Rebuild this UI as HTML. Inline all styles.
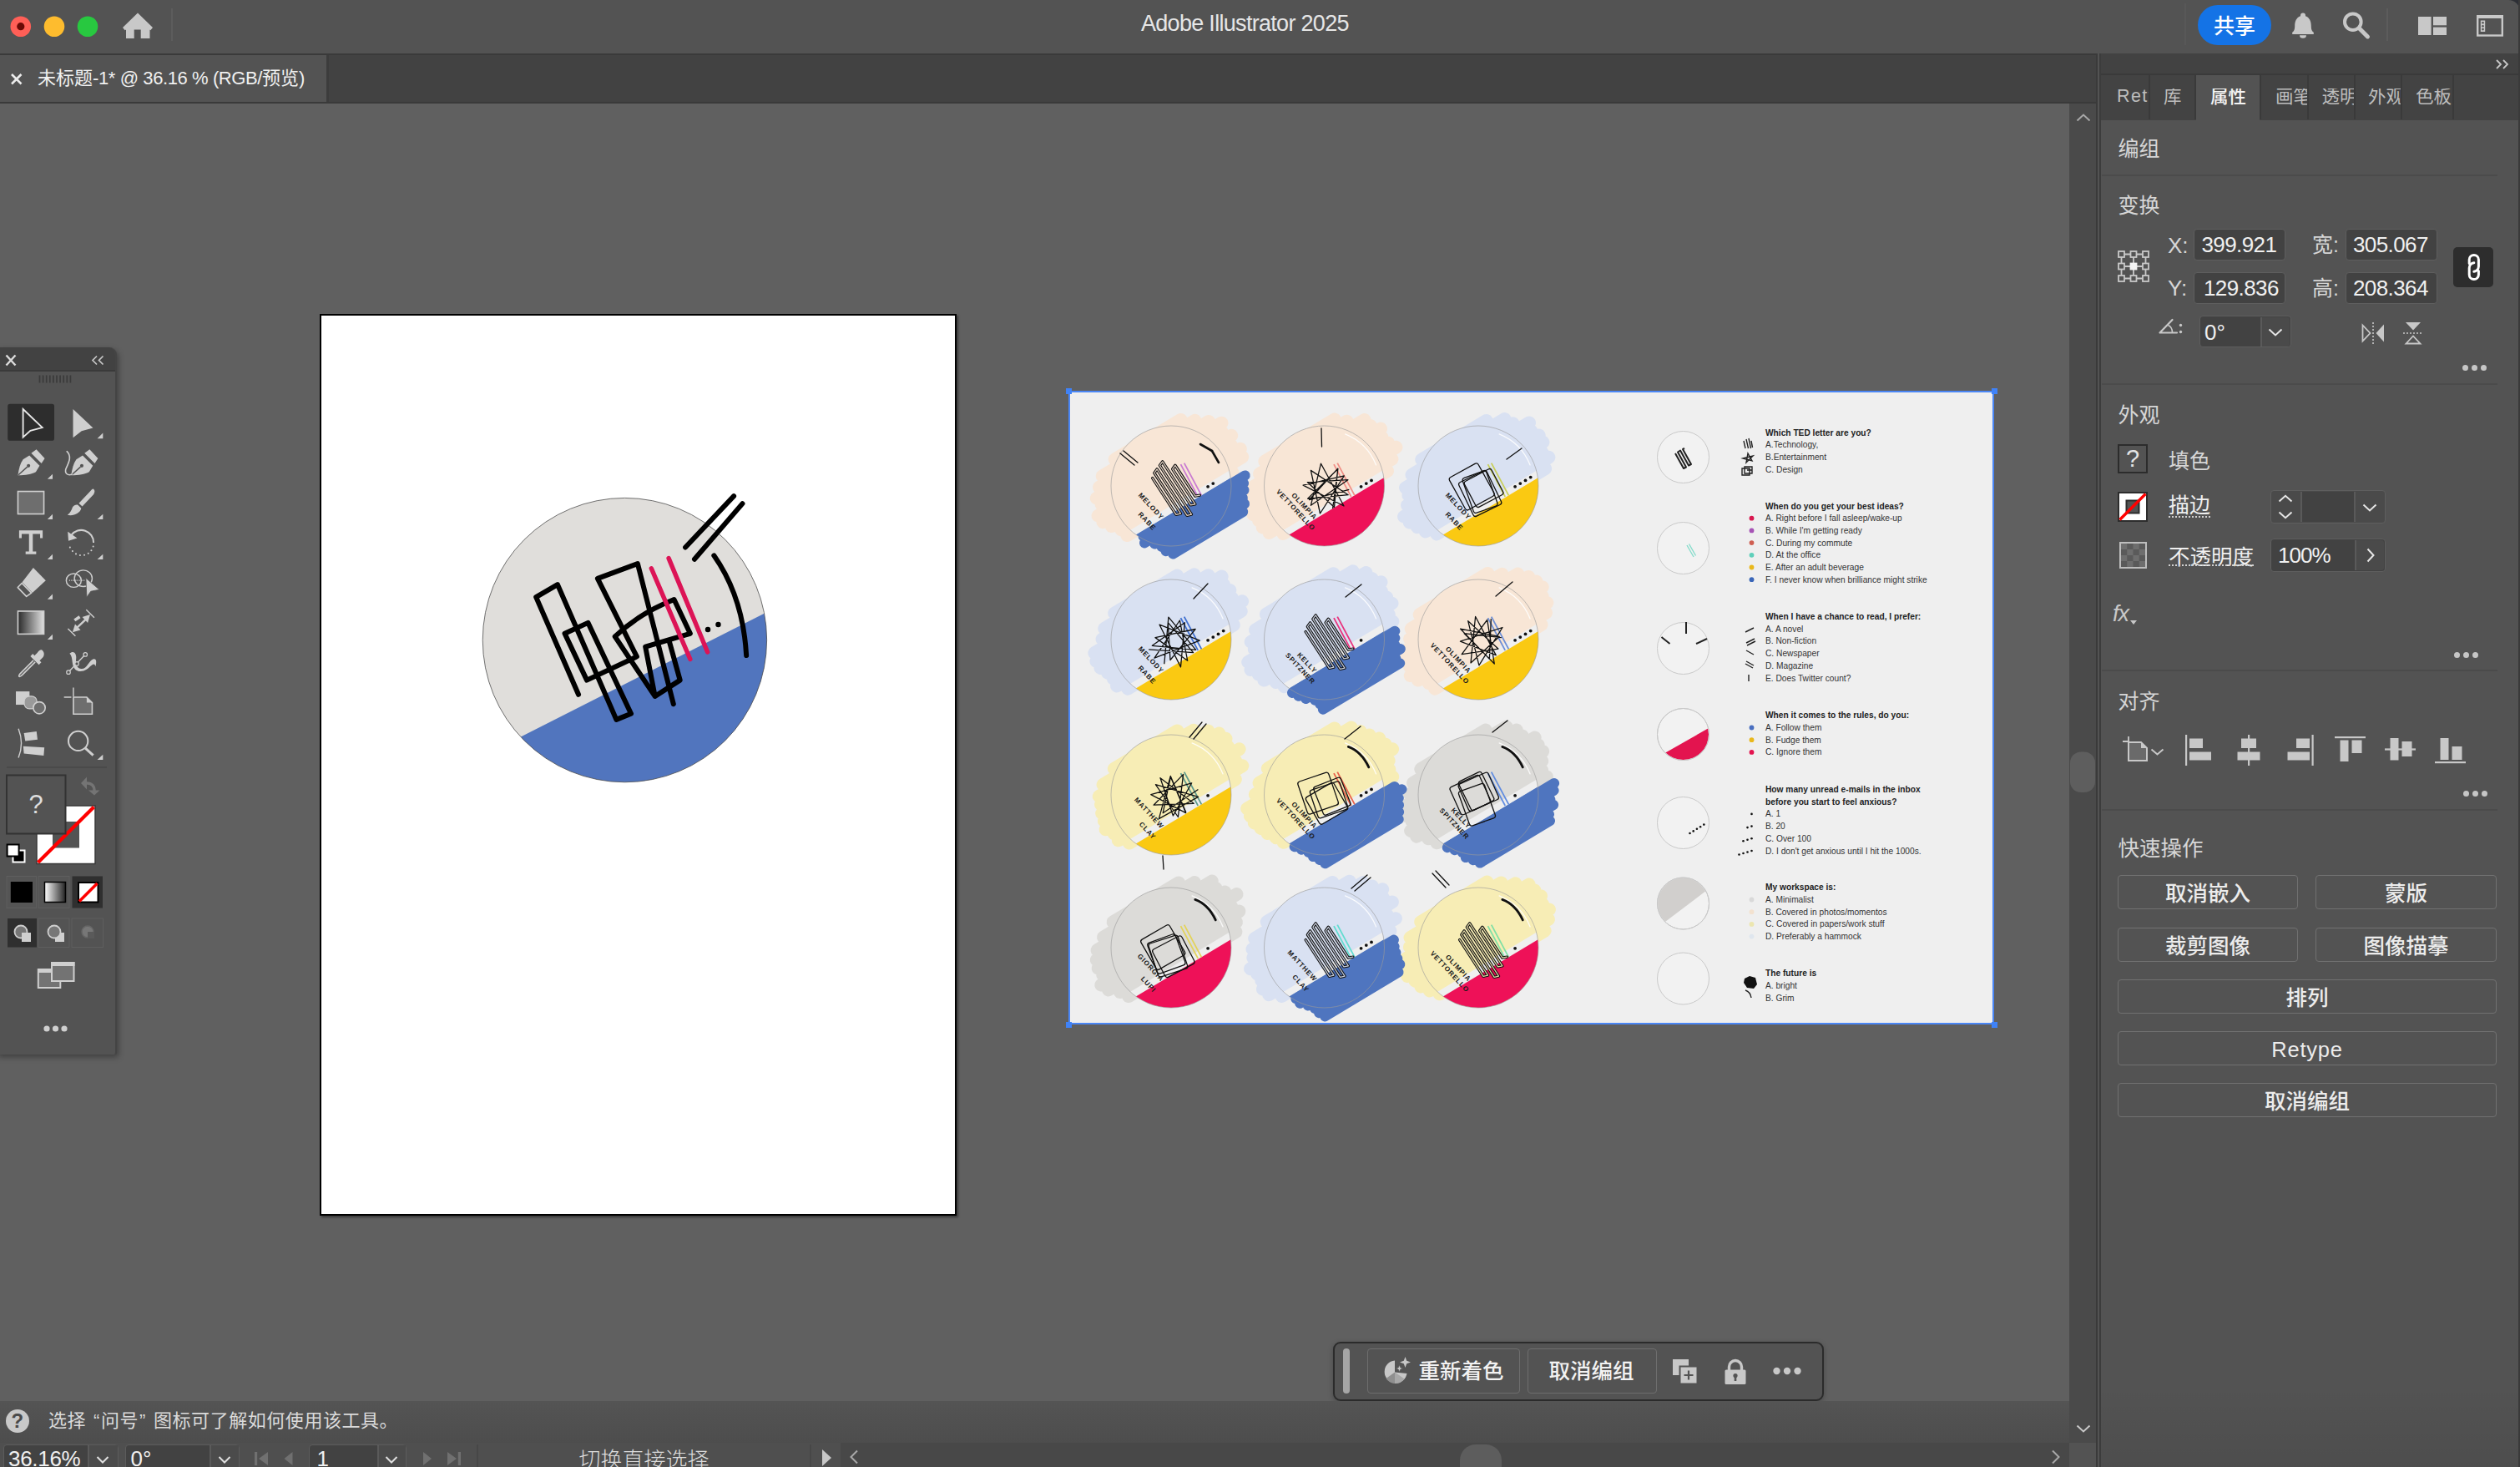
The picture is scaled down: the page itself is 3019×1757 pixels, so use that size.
<!DOCTYPE html>
<html lang="zh-CN">
<head>
<meta charset="utf-8">
<title>Adobe Illustrator 2025</title>
<style>
html,body{margin:0;padding:0;}
body{width:3019px;height:1757px;overflow:hidden;background:#606060;position:relative;font-family:"Liberation Sans","Noto Sans CJK SC",sans-serif;color:#dcdcdc;}
.abs{position:absolute;}
.t{position:absolute;white-space:nowrap;line-height:1;}
svg{position:absolute;overflow:visible;}
#titlebar{left:0;top:0;width:3019px;height:64px;background:#535353;}
#tabbar{left:0;top:64px;width:2511px;height:60px;background:#424242;}
#tabbar .line1{left:0;top:0;width:2511px;height:2px;background:#3a3a3a;}
#tabbar .line2{left:0;top:58px;width:2511px;height:2px;background:#3a3a3a;}
#doctab{left:0;top:2px;width:391px;height:56px;background:#535353;}
#rpanel{left:2511px;top:64px;width:508px;height:1693px;background:#535353;}
.sec{font-size:25px;color:#d6d6d6;}
.lbl{font-size:25px;color:#d6d6d6;}
.fld{position:absolute;background:#424242;border:1.5px solid #5e5e5e;border-radius:4px;box-sizing:border-box;}
.v{position:absolute;white-space:nowrap;line-height:1;color:#f0f0f0;font-size:26px;}
.sep{position:absolute;height:2px;background:#4b4b4b;left:2518px;width:474px;}
.qbtn{position:absolute;box-sizing:border-box;border:1.5px solid #717171;border-radius:4px;height:41px;color:#ececec;font-size:25.500px;font-weight:500;text-align:center;line-height:43.500px;overflow:visible;white-space:nowrap;}
.dots i{position:absolute;width:7px;height:7px;border-radius:50%;background:#c6c6c6;top:0;}
.dots{position:absolute;width:30px;height:7px;}
.dots i:nth-child(1){left:0}.dots i:nth-child(2){left:11px}.dots i:nth-child(3){left:22px}
</style>
</head>
<body>
<!-- ===== TITLE BAR ===== -->
<div id="titlebar" class="abs">
  <svg width="3019" height="64" style="left:0;top:0" viewBox="0 0 3019 64">
    <circle cx="24.8" cy="31.7" r="12.3" fill="#ff5f57"/><circle cx="24.8" cy="31.7" r="4.6" fill="#6b0a06"/>
    <circle cx="65" cy="31.7" r="12.3" fill="#febc2e"/>
    <circle cx="105" cy="31.7" r="12.3" fill="#28c840"/>
    <path d="M165,15.5 L183,33 L180.3,36.3 L179.5,35.6 L179.5,46 L168.7,46 L168.7,35.5 L160.7,35.5 L160.7,46 L151,46 L151,35.6 L149.7,36.3 L147,33 Z" fill="#c8c8c8"/>
    <rect x="205" y="10" width="2" height="39" fill="#5c5c5c"/>
    <rect x="2617" y="4" width="2" height="50" fill="#585858"/>
    <!-- bell -->
    <path d="M2759,15.5 a3,3 0 0 1 3,3 v0.7 c5,1.8 6.8,6.5 6.8,12 c0,4.5 1.2,6.3 3,7.6 v2.2 h-25.6 v-2.2 c1.800,-1.3 3,-3.1 3,-7.6 c0,-5.5 1.8,-10.200 6.8,-12 v-0.7 a3,3 0 0 1 3,-3 z M2755,42.200 h8 a4,3.500 0 0 1 -8,0 z" fill="#c8c8c8"/>
    <!-- search -->
    <circle cx="2818.8" cy="26.2" r="9.8" fill="none" stroke="#c8c8c8" stroke-width="4"/>
    <path d="M2826.500,33.900 L2836.500,43.900" stroke="#c8c8c8" stroke-width="5" stroke-linecap="round"/>
    <rect x="2859" y="10" width="2" height="39" fill="#5c5c5c"/>
    <!-- grid -->
    <rect x="2897" y="20" width="15.6" height="22" fill="#c8c8c8"/>
    <rect x="2915" y="20" width="16" height="10.300" fill="#c8c8c8"/>
    <rect x="2915" y="32.600" width="16" height="9.400" fill="#c8c8c8"/>
    <!-- window -->
    <rect x="2968.200" y="19.200" width="29.600" height="23.300" fill="none" stroke="#c8c8c8" stroke-width="2.400"/>
    <rect x="2967" y="18" width="32" height="4" fill="#c8c8c8"/>
    <rect x="2971.800" y="24.500" width="5.400" height="13.500" fill="#c8c8c8"/>
    <circle cx="2974.500" cy="27.300" r="1.300" fill="#535353"/><circle cx="2974.500" cy="31.200" r="1.300" fill="#535353"/><circle cx="2974.500" cy="35.100" r="1.300" fill="#535353"/>
    <!-- window corner -->
    <path d="M3019,0 h-14 a14,14 0 0 1 14,14 z" fill="#2e3036"/>
  </svg>
  <div class="t" id="apptitle" style="left:1367px;top:15px;font-size:27px;letter-spacing:-0.700px;color:#e6e6e6;">Adobe Illustrator 2025</div>
  <div class="abs" style="left:2633px;top:6px;width:88px;height:48px;border-radius:24px;background:#1473e6;"></div>
  <div class="t" id="sharetxt" style="left:2652px;top:19px;font-size:25px;font-weight:500;color:#fff;">共享</div>
</div>
<!-- ===== TAB BAR ===== -->
<div id="tabbar" class="abs"><div class="abs line1"></div><div class="abs line2"></div>
  <div id="doctab" class="abs">
    <svg width="16" height="16" style="left:11.500px;top:20.500px" viewBox="0 0 16 16"><path d="M2,2 L13.500,13.500 M13.500,2 L2,13.500" stroke="#ececec" stroke-width="2.600" fill="none"/></svg>
    <div class="t" id="tabtxt" style="left:45px;top:17px;font-size:22px;color:#f0f0f0;">未标题<span style="letter-spacing:-0.400px">-1* @ 36.16 % (RGB/</span>预览)</div>
  </div>
  <div class="abs" style="left:391px;top:2px;width:3px;height:56px;background:#3c3c3c;"></div>
</div>
<!-- ===== CANVAS ===== -->
<div class="abs" id="artboard" style="left:383px;top:375.500px;width:763px;height:1080.500px;background:#fff;border:2px solid #000;box-sizing:border-box;box-shadow:1.500px 1.500px 2.500px rgba(0,0,0,0.4);"></div>
<svg id="art1" width="380" height="380" style="left:560px;top:570px" viewBox="0 0 1467 1467">
  <defs><clipPath id="c1"><circle cx="727.5" cy="759" r="657"/></clipPath></defs>
  <circle cx="727.5" cy="759" r="657" fill="#e0dedb"/>
  <path d="M-200,1433 L1700,470 L1700,1800 L-200,1800 Z" fill="#5175be" clip-path="url(#c1)"/>
  <circle cx="727.5" cy="759" r="657" fill="none" stroke="#4a4a4a" stroke-width="3"/>
  <g fill="none" stroke="#000" stroke-width="23" stroke-linecap="round" stroke-linejoin="round">
    <path d="M1008,330 L1232,93 M1050,385 L1272,128"/>
    <path d="M1140,368 Q1275,560 1290,830"/>
  </g>
  <circle cx="1112" cy="710" r="12.500" fill="#000"/><circle cx="1160" cy="687" r="12.500" fill="#000"/>
</svg>
<svg id="art2" width="250" height="210" style="left:630px;top:660px" viewBox="0 0 1746 1467">
  <g fill="none" stroke="#000" stroke-width="42" stroke-linecap="round" stroke-linejoin="round">
    <path d="M440,1200 L85,385 L265,280 L757,1410 L880,1360 L520,600 L325,690 L510,1080 L928,883 L600,230 L935,105 L1235,1280"/>
    <path d="M1080,1215 L745,715 Q950,520 1240,405 L1375,690 L1000,800 L1080,1215 L1290,1080 L1200,755"/>
  </g>
  <g fill="none" stroke="#dc1456" stroke-width="38" stroke-linecap="round">
    <path d="M1050,145 L1375,905 M1195,60 L1520,845"/>
  </g>
</svg>
<!-- ===== PLACED IMAGE ===== -->
<svg id="placed" width="1107" height="757" style="left:1281px;top:469px" viewBox="1281 469 1107 757" font-family="'Liberation Sans', sans-serif">
<rect x="1281" y="469" width="1107" height="757" fill="#efefef"/>
<g>
<path d="M1335.7,550.2L1414.7,502.8M1320.7,570.3L1431.5,503.7M1317.0,583.6L1448.2,504.8M1313.7,596.7L1463.6,506.6M1319.6,604.2L1463.9,517.6M1315.5,617.7L1475.3,521.7M1321.4,625.3L1474.8,533.1M1331.7,630.2L1485.9,537.6M1343.3,634.4L1488.3,547.2M1350.3,641.2L1476.3,565.5" stroke="#f8e6d6" stroke-width="15.8" stroke-linecap="round" fill="none" opacity="1"/>
</g>
<g>
<path d="M1515.3,552.6L1598.8,502.4M1509.0,567.4L1613.6,504.6M1497.8,585.2L1634.6,503.0M1497.0,596.8L1641.8,509.8M1498.3,607.1L1654.1,513.5M1501.5,616.3L1655.5,523.7M1508.1,623.4L1663.0,530.3M1512.7,631.7L1672.5,535.7M1520.5,638.1L1667.5,549.8M1537.3,639.1L1662.1,564.1" stroke="#f8e6d6" stroke-width="15.8" stroke-linecap="round" fill="none" opacity="1"/>
</g>
<g>
<path d="M1703.2,550.5L1780.8,503.8M1691.4,568.7L1802.5,501.9M1684.0,584.2L1812.4,507.1M1687.4,593.3L1832.1,506.3M1686.0,605.2L1834.3,516.1M1682.0,618.7L1843.8,521.5M1688.7,625.7L1848.5,529.7M1697.9,631.3L1847.2,541.6M1707.7,636.5L1855.5,547.7M1721.2,639.5L1851.2,561.3" stroke="#d9e1f2" stroke-width="15.8" stroke-linecap="round" fill="none" opacity="1"/>
</g>
<g>
<path d="M1335.2,734.5L1410.2,689.4M1323.2,752.8L1430.7,688.2M1320.5,765.5L1447.7,689.1M1311.3,782.1L1463.7,690.5M1313.3,792.0L1466.1,700.2M1318.4,800.0L1473.4,706.9M1327.1,805.9L1476.1,716.4M1333.9,812.9L1488.2,720.2M1338.0,821.5L1486.8,732.1M1351.1,824.8L1477.9,748.5" stroke="#d9e1f2" stroke-width="15.8" stroke-linecap="round" fill="none" opacity="1"/>
</g>
<g>
<path d="M1516.9,735.6L1597.5,687.1M1504.0,754.4L1620.8,684.2M1498.6,768.8L1636.5,685.9M1502.7,777.4L1643.5,692.8M1495.1,793.0L1654.6,697.2M1498.4,802.1L1655.0,708.1M1507.7,807.6L1661.2,715.4M1514.3,814.7L1667.6,722.6M1528.6,817.2L1663.9,736.0M1538.6,822.3L1668.4,744.3" stroke="#d9e1f2" stroke-width="15.8" stroke-linecap="round" fill="none" opacity="1"/>
</g>
<g>
<path d="M1700.6,736.1L1782.5,686.8M1690.6,753.1L1799.6,687.7M1689.0,765.2L1818.4,687.5M1683.3,779.7L1831.3,690.8M1685.0,789.8L1840.5,696.3M1689.0,798.5L1847.8,703.1M1689.7,809.1L1847.7,714.2M1698.9,814.7L1853.4,721.9M1711.6,818.2L1852.1,733.8M1719.0,824.8L1846.6,748.1" stroke="#f8e6d6" stroke-width="15.8" stroke-linecap="round" fill="none" opacity="1"/>
</g>
<g>
<path d="M1334.8,920.7L1410.5,875.3M1321.5,939.8L1430.0,874.7M1316.7,953.8L1447.4,875.3M1319.0,963.5L1460.5,878.5M1320.1,973.9L1468.6,884.7M1322.9,983.3L1471.2,894.2M1324.6,993.4L1484.7,897.2M1334.7,998.4L1480.1,911.1M1339.8,1006.4L1488.4,917.2M1352.8,1009.7L1479.9,933.4" stroke="#f7edb5" stroke-width="15.8" stroke-linecap="round" fill="none" opacity="1"/>
</g>
<g>
<path d="M1518.8,920.4L1598.9,872.3M1508.5,937.7L1618.8,871.4M1503.8,951.6L1629.7,876.0M1494.1,968.5L1640.7,880.5M1497.9,977.3L1652.4,884.5M1502.7,985.5L1659.6,891.3M1510.4,992.0L1668.2,897.2M1518.5,998.2L1663.7,911.0M1528.6,1003.3L1664.4,921.6M1537.6,1008.9L1668.3,930.4" stroke="#f7edb5" stroke-width="15.8" stroke-linecap="round" fill="none" opacity="1"/>
</g>
<g>
<path d="M1702.2,921.1L1779.8,874.5M1693.0,937.7L1804.7,870.6M1689.0,951.2L1816.8,874.4M1679.5,968.0L1823.7,881.3M1683.3,976.8L1838.7,883.4M1691.2,983.2L1842.7,892.1M1690.0,995.0L1848.2,899.9M1697.1,1001.8L1847.3,911.5M1711.2,1004.4L1847.2,922.6M1721.4,1009.4L1853.0,930.3" stroke="#dcdbd8" stroke-width="15.8" stroke-linecap="round" fill="none" opacity="1"/>
</g>
<g>
<path d="M1333.6,1104.4L1412.2,1057.3M1322.0,1122.5L1431.1,1057.0M1314.5,1138.1L1452.0,1055.5M1313.7,1149.7L1456.6,1063.8M1315.6,1159.6L1467.4,1068.4M1321.2,1167.4L1481.6,1071.0M1319.2,1179.7L1475.3,1085.8M1327.9,1185.5L1484.5,1091.4M1341.9,1188.2L1481.1,1104.5M1352.0,1193.2L1480.5,1116.0" stroke="#dcdbd8" stroke-width="15.8" stroke-linecap="round" fill="none" opacity="1"/>
</g>
<g>
<path d="M1517.7,1104.1L1596.4,1056.8M1503.1,1123.9L1616.8,1055.6M1500.4,1136.7L1633.1,1056.9M1501.3,1147.2L1644.0,1061.5M1498.0,1160.3L1656.3,1065.2M1506.2,1166.5L1657.3,1075.7M1511.3,1174.4L1668.0,1080.3M1512.9,1184.6L1661.5,1095.3M1520.2,1191.3L1672.0,1100.1M1535.7,1193.1L1665.5,1115.1" stroke="#d9e1f2" stroke-width="15.8" stroke-linecap="round" fill="none" opacity="1"/>
</g>
<g>
<path d="M1702.1,1104.2L1781.5,1056.4M1689.4,1122.9L1798.6,1057.3M1688.9,1134.3L1815.5,1058.2M1685.0,1147.7L1831.8,1059.5M1682.0,1160.6L1838.6,1066.5M1686.2,1169.1L1846.1,1073.1M1695.3,1174.8L1848.1,1083.0M1702.4,1181.6L1856.0,1089.3M1712.7,1186.5L1855.0,1101.0M1724.7,1190.4L1850.7,1114.7" stroke="#f7edb5" stroke-width="15.8" stroke-linecap="round" fill="none" opacity="1"/>
</g>
<g>
<defs><clipPath id="bc13"><circle cx="1403" cy="582" r="72.0"/></clipPath></defs>
<circle cx="1403" cy="582" r="72.0" fill="#f8e6d6"/>
<path d="M1290.0,673.4L1536.8,525.1L1541.8,533.4L1295.0,681.8Z" fill="#efefef" clip-path="url(#bc13)"/>
<path d="M1369.8,642.7L1491.6,569.5M1371.1,650.3L1490.0,578.8M1383.2,651.4L1490.4,587.0M1391.6,654.8L1488.8,596.4M1396.7,660.1L1491.0,603.5M1405.2,663.4L1489.1,613.0" stroke="#4f75bf" stroke-width="12.2" stroke-linecap="round" fill="none" opacity="1"/>
<path d="M1294.2,680.5L1541.1,532.2L1600.6,631.3L1353.7,779.6Z" fill="#4f75bf" clip-path="url(#bc13)"/>
<circle cx="1403" cy="582" r="72.0" fill="none" stroke="#9a9a9a" stroke-width="0.8" opacity="0.8"/>
<path d="M1414.5,556.1l20.7,38.8" stroke="#c97bd1" stroke-width="1.800" fill="none"/>
<path d="M1418.7,554.6l20.7,38.8" stroke="#c97bd1" stroke-width="1.800" fill="none"/>
<path d="M1380.7,572.6L1409.0,616.3L1414.5,615.1L1382.9,566.5L1386.1,561.9L1422.1,617.3L1427.5,616.1L1389.4,557.4L1392.7,552.9L1426.4,604.9L1431.9,603.8L1404.7,561.8L1407.9,557.3L1431.9,594.2L1437.4,593.1" stroke="#111" stroke-width="3.400" fill="none" stroke-linejoin="round" stroke-linecap="round"/>
<path d="M1380.7,572.6L1409.0,616.3L1414.5,615.1L1382.9,566.5L1386.1,561.9L1422.1,617.3L1427.5,616.1L1389.4,557.4L1392.7,552.9L1426.4,604.9L1431.9,603.8L1404.7,561.8L1407.9,557.3L1431.9,594.2L1437.4,593.1" stroke="#f8e6d6" stroke-width="1.200" fill="none" stroke-linejoin="round" stroke-linecap="round" opacity="0.9"/>
<circle cx="1447.1" cy="582.8" r="1.900" fill="#111"/>
<circle cx="1453.3" cy="579.1" r="1.900" fill="#111"/>
<text transform="translate(1390.8 623.0) rotate(47)" text-anchor="end" font-size="8.200" font-weight="bold" letter-spacing="0.900" fill="#1a1a1a">MELODY</text>
<text transform="translate(1381.4 636.0) rotate(47)" text-anchor="end" font-size="8.200" font-weight="bold" letter-spacing="0.900" fill="#1a1a1a">RABE</text>
</g>
<g>
<defs><clipPath id="bc14"><circle cx="1586.5" cy="582" r="72.0"/></clipPath></defs>
<circle cx="1586.5" cy="582" r="72.0" fill="#f8e6d6"/>
<path d="M1473.5,673.4L1720.3,525.1L1725.3,533.4L1478.5,681.8Z" fill="#efefef" clip-path="url(#bc14)"/>
<path d="M1477.7,680.5L1724.6,532.2L1784.1,631.3L1537.2,779.6Z" fill="#ee1158" clip-path="url(#bc14)"/>
<circle cx="1586.5" cy="582" r="72.0" fill="none" stroke="#9a9a9a" stroke-width="0.8" opacity="0.8"/>
<path d="M1611.6,519.9 A67.0,67.0 0 0 1 1648.6,556.9" fill="none" stroke="#fff" stroke-width="1.300" opacity="0.85" stroke-linecap="round"/>
<path d="M1598.0,556.1l20.7,38.8" stroke="#f08f86" stroke-width="1.800" fill="none"/>
<path d="M1602.2,554.6l20.7,38.8" stroke="#f08f86" stroke-width="1.800" fill="none"/>
<path d="M1616.3,586.3L1568.6,598.5L1602.7,561.1L1598.5,607.4L1566.3,577.6L1614.9,574.7L1570.4,605.3L1582.5,555.2L1610.0,606.0L1561.1,581.1L1610.3,569.9L1581.5,615.0L1570.4,563.4L1615.2,592.7L1566.7,597.3L1602.9,561.5L1596.6,609.2" stroke="#111" stroke-width="1.300" fill="none" stroke-linejoin="round"/>
<circle cx="1630.6" cy="582.8" r="1.900" fill="#111"/>
<circle cx="1636.8" cy="579.1" r="1.900" fill="#111"/>
<circle cx="1643.0" cy="575.4" r="1.900" fill="#111"/>
<text transform="translate(1574.3 623.0) rotate(47)" text-anchor="end" font-size="8.200" font-weight="bold" letter-spacing="0.900" fill="#1a1a1a">OLIMPIA</text>
<text transform="translate(1572.1 636.0) rotate(47)" text-anchor="end" font-size="8.200" font-weight="bold" letter-spacing="0.900" fill="#1a1a1a">VETTORELLO</text>
</g>
<g>
<defs><clipPath id="bc15"><circle cx="1771" cy="582" r="72.0"/></clipPath></defs>
<circle cx="1771" cy="582" r="72.0" fill="#d9e1f2"/>
<path d="M1658.0,673.4L1904.8,525.1L1909.8,533.4L1663.0,681.8Z" fill="#efefef" clip-path="url(#bc15)"/>
<path d="M1662.2,680.5L1909.1,532.2L1968.6,631.3L1721.7,779.6Z" fill="#fac912" clip-path="url(#bc15)"/>
<circle cx="1771" cy="582" r="72.0" fill="none" stroke="#9a9a9a" stroke-width="0.8" opacity="0.8"/>
<path d="M1796.1,519.9 A67.0,67.0 0 0 1 1833.1,556.9" fill="none" stroke="#fff" stroke-width="1.300" opacity="0.85" stroke-linecap="round"/>
<path d="M1782.5,556.1l20.7,38.8" stroke="#c9cf5a" stroke-width="1.800" fill="none"/>
<path d="M1786.7,554.6l20.7,38.8" stroke="#c9cf5a" stroke-width="1.800" fill="none"/>
<rect x="1757.3" y="569.9" width="36.7" height="34.8" rx="3" transform="rotate(-27.8 1771 582)" stroke="#111" stroke-width="1.300" fill="none"/>
<rect x="1755.4" y="567.3" width="30.3" height="44.4" rx="3" transform="rotate(-19.7 1771 582)" stroke="#111" stroke-width="1.300" fill="none"/>
<rect x="1750.5" y="568.5" width="37.1" height="45.1" rx="3" transform="rotate(-25.8 1771 582)" stroke="#111" stroke-width="1.300" fill="none"/>
<rect x="1744.1" y="556.8" width="39.4" height="44.5" rx="3" transform="rotate(-29.0 1771 582)" stroke="#111" stroke-width="1.300" fill="none"/>
<circle cx="1815.1" cy="582.8" r="1.900" fill="#111"/>
<circle cx="1821.3" cy="579.1" r="1.900" fill="#111"/>
<circle cx="1827.5" cy="575.4" r="1.900" fill="#111"/>
<circle cx="1833.7" cy="571.6" r="1.900" fill="#111"/>
<text transform="translate(1758.8 623.0) rotate(47)" text-anchor="end" font-size="8.200" font-weight="bold" letter-spacing="0.900" fill="#1a1a1a">MELODY</text>
<text transform="translate(1749.4 636.0) rotate(47)" text-anchor="end" font-size="8.200" font-weight="bold" letter-spacing="0.900" fill="#1a1a1a">RABE</text>
</g>
<g>
<defs><clipPath id="bc16"><circle cx="1403" cy="766" r="72.0"/></clipPath></defs>
<circle cx="1403" cy="766" r="72.0" fill="#d9e1f2"/>
<path d="M1290.0,857.4L1536.8,709.1L1541.8,717.4L1295.0,865.8Z" fill="#efefef" clip-path="url(#bc16)"/>
<path d="M1294.2,864.5L1541.1,716.2L1600.6,815.3L1353.7,963.6Z" fill="#fac912" clip-path="url(#bc16)"/>
<circle cx="1403" cy="766" r="72.0" fill="none" stroke="#9a9a9a" stroke-width="0.8" opacity="0.8"/>
<path d="M1428.1,703.9 A67.0,67.0 0 0 1 1465.1,740.9" fill="none" stroke="#fff" stroke-width="1.300" opacity="0.85" stroke-linecap="round"/>
<path d="M1414.5,740.1l20.7,38.8" stroke="#3f6fd0" stroke-width="1.800" fill="none"/>
<path d="M1418.7,738.6l20.7,38.8" stroke="#3f6fd0" stroke-width="1.800" fill="none"/>
<path d="M1394.8,795.3L1399.9,739.2L1432.7,778.3L1380.3,773.3L1419.3,745.7L1414.5,798.9L1389.1,748.2L1437.3,767.1L1383.0,788.2L1413.4,743.0L1422.7,791.3L1384.0,763.6L1432.1,753.5L1402.0,790.5L1399.3,745.6L1429.6,781.7L1376.2,777.8" stroke="#111" stroke-width="1.300" fill="none" stroke-linejoin="round"/>
<circle cx="1447.1" cy="766.8" r="1.900" fill="#111"/>
<circle cx="1453.3" cy="763.1" r="1.900" fill="#111"/>
<circle cx="1459.5" cy="759.4" r="1.900" fill="#111"/>
<circle cx="1465.7" cy="755.6" r="1.900" fill="#111"/>
<text transform="translate(1390.8 807.0) rotate(47)" text-anchor="end" font-size="8.200" font-weight="bold" letter-spacing="0.900" fill="#1a1a1a">MELODY</text>
<text transform="translate(1381.4 820.0) rotate(47)" text-anchor="end" font-size="8.200" font-weight="bold" letter-spacing="0.900" fill="#1a1a1a">RABE</text>
</g>
<g>
<defs><clipPath id="bc17"><circle cx="1586.5" cy="766" r="72.0"/></clipPath></defs>
<circle cx="1586.5" cy="766" r="72.0" fill="#d9e1f2"/>
<path d="M1473.5,857.4L1720.3,709.1L1725.3,717.4L1478.5,865.8Z" fill="#efefef" clip-path="url(#bc17)"/>
<path d="M1548.1,829.8L1671.2,755.8M1555.5,833.7L1671.2,764.2M1564.2,836.9L1671.3,772.6M1575.3,838.7L1677.7,777.2M1581.4,843.4L1672.3,788.8M1585.0,849.6L1677.1,794.3" stroke="#4f75bf" stroke-width="12.2" stroke-linecap="round" fill="none" opacity="1"/>
<path d="M1477.7,864.5L1724.6,716.2L1784.1,815.3L1537.2,963.6Z" fill="#4f75bf" clip-path="url(#bc17)"/>
<circle cx="1586.5" cy="766" r="72.0" fill="none" stroke="#9a9a9a" stroke-width="0.8" opacity="0.8"/>
<path d="M1611.6,703.9 A67.0,67.0 0 0 1 1648.6,740.9" fill="none" stroke="#fff" stroke-width="1.300" opacity="0.85" stroke-linecap="round"/>
<path d="M1598.0,740.1l20.7,38.8" stroke="#e8337d" stroke-width="1.800" fill="none"/>
<path d="M1602.2,738.6l20.7,38.8" stroke="#e8337d" stroke-width="1.800" fill="none"/>
<path d="M1564.2,756.6L1592.5,800.3L1598.0,799.1L1566.4,750.5L1569.6,745.9L1605.6,801.3L1611.0,800.1L1572.9,741.4L1576.2,736.9L1609.9,788.9L1615.4,787.8L1588.2,745.8L1591.4,741.3L1615.4,778.2L1620.9,777.1" stroke="#111" stroke-width="3.400" fill="none" stroke-linejoin="round" stroke-linecap="round"/>
<path d="M1564.2,756.6L1592.5,800.3L1598.0,799.1L1566.4,750.5L1569.6,745.9L1605.6,801.3L1611.0,800.1L1572.9,741.4L1576.2,736.9L1609.9,788.9L1615.4,787.8L1588.2,745.8L1591.4,741.3L1615.4,778.2L1620.9,777.1" stroke="#d9e1f2" stroke-width="1.200" fill="none" stroke-linejoin="round" stroke-linecap="round" opacity="0.9"/>
<circle cx="1630.6" cy="766.8" r="1.900" fill="#111"/>
<text transform="translate(1574.3 807.0) rotate(47)" text-anchor="end" font-size="8.200" font-weight="bold" letter-spacing="0.900" fill="#1a1a1a">KELLY</text>
<text transform="translate(1572.1 820.0) rotate(47)" text-anchor="end" font-size="8.200" font-weight="bold" letter-spacing="0.900" fill="#1a1a1a">SPITZNER</text>
</g>
<g>
<defs><clipPath id="bc18"><circle cx="1771" cy="766" r="72.0"/></clipPath></defs>
<circle cx="1771" cy="766" r="72.0" fill="#f8e6d6"/>
<path d="M1658.0,857.4L1904.8,709.1L1909.8,717.4L1663.0,865.8Z" fill="#efefef" clip-path="url(#bc18)"/>
<path d="M1662.2,864.5L1909.1,716.2L1968.6,815.3L1721.7,963.6Z" fill="#fac912" clip-path="url(#bc18)"/>
<circle cx="1771" cy="766" r="72.0" fill="none" stroke="#9a9a9a" stroke-width="0.8" opacity="0.8"/>
<path d="M1796.1,703.9 A67.0,67.0 0 0 1 1833.1,740.9" fill="none" stroke="#fff" stroke-width="1.300" opacity="0.85" stroke-linecap="round"/>
<path d="M1782.5,740.1l20.7,38.8" stroke="#6d8fd6" stroke-width="1.800" fill="none"/>
<path d="M1786.7,738.6l20.7,38.8" stroke="#6d8fd6" stroke-width="1.800" fill="none"/>
<path d="M1786.3,741.1L1784.4,789.2L1749.5,753.1L1796.2,762.4L1762.0,793.9L1767.6,738.5L1792.2,784.6L1749.4,768.2L1800.0,751.5L1771.9,796.8L1758.7,743.7L1794.9,777.1L1751.2,783.6L1781.7,742.3L1790.3,795.0L1754.2,758.7L1798.8,763.7" stroke="#111" stroke-width="1.300" fill="none" stroke-linejoin="round"/>
<circle cx="1815.1" cy="766.8" r="1.900" fill="#111"/>
<circle cx="1821.3" cy="763.1" r="1.900" fill="#111"/>
<circle cx="1827.5" cy="759.4" r="1.900" fill="#111"/>
<circle cx="1833.7" cy="755.6" r="1.900" fill="#111"/>
<text transform="translate(1758.8 807.0) rotate(47)" text-anchor="end" font-size="8.200" font-weight="bold" letter-spacing="0.900" fill="#1a1a1a">OLIMPIA</text>
<text transform="translate(1756.6 820.0) rotate(47)" text-anchor="end" font-size="8.200" font-weight="bold" letter-spacing="0.900" fill="#1a1a1a">VETTORELLO</text>
</g>
<g>
<defs><clipPath id="bc19"><circle cx="1403" cy="952" r="72.0"/></clipPath></defs>
<circle cx="1403" cy="952" r="72.0" fill="#f7edb5"/>
<path d="M1290.0,1043.4L1536.8,895.1L1541.8,903.4L1295.0,1051.8Z" fill="#efefef" clip-path="url(#bc19)"/>
<path d="M1294.2,1050.5L1541.1,902.2L1600.6,1001.3L1353.7,1149.6Z" fill="#fac912" clip-path="url(#bc19)"/>
<circle cx="1403" cy="952" r="72.0" fill="none" stroke="#9a9a9a" stroke-width="0.8" opacity="0.8"/>
<path d="M1428.1,889.9 A67.0,67.0 0 0 1 1465.1,926.9" fill="none" stroke="#fff" stroke-width="1.300" opacity="0.85" stroke-linecap="round"/>
<path d="M1414.5,926.1l20.7,38.8" stroke="#5d9a8c" stroke-width="1.800" fill="none"/>
<path d="M1418.7,924.6l20.7,38.8" stroke="#5d9a8c" stroke-width="1.800" fill="none"/>
<path d="M1435.4,945.5L1393.2,973.7L1402.4,930.5L1420.6,973.6L1378.8,951.6L1427.7,937.8L1405.4,977.0L1390.0,931.7L1430.2,962.3L1382.1,964.2L1417.6,927.4L1411.4,978.5L1384.4,939.7L1435.5,954.4L1388.4,980.6L1402.3,929.4L1420.9,973.1" stroke="#111" stroke-width="1.300" fill="none" stroke-linejoin="round"/>
<circle cx="1447.1" cy="952.8" r="1.900" fill="#111"/>
<text transform="translate(1390.8 993.0) rotate(47)" text-anchor="end" font-size="8.200" font-weight="bold" letter-spacing="0.900" fill="#1a1a1a">MATTHEW</text>
<text transform="translate(1381.4 1006.0) rotate(47)" text-anchor="end" font-size="8.200" font-weight="bold" letter-spacing="0.900" fill="#1a1a1a">CLAY</text>
</g>
<g>
<defs><clipPath id="bc20"><circle cx="1586.5" cy="952" r="72.0"/></clipPath></defs>
<circle cx="1586.5" cy="952" r="72.0" fill="#f7edb5"/>
<path d="M1473.5,1043.4L1720.3,895.1L1725.3,903.4L1478.5,1051.8Z" fill="#efefef" clip-path="url(#bc20)"/>
<path d="M1550.8,1014.2L1670.8,942.1M1559.1,1017.6L1679.4,945.3M1567.6,1020.9L1675.7,955.9M1573.1,1026.0L1675.9,964.2M1580.8,1029.8L1676.0,972.6M1587.4,1034.2L1675.6,981.2" stroke="#4f75bf" stroke-width="12.2" stroke-linecap="round" fill="none" opacity="1"/>
<path d="M1477.7,1050.5L1724.6,902.2L1784.1,1001.3L1537.2,1149.6Z" fill="#4f75bf" clip-path="url(#bc20)"/>
<circle cx="1586.5" cy="952" r="72.0" fill="none" stroke="#9a9a9a" stroke-width="0.8" opacity="0.8"/>
<path d="M1611.6,889.9 A67.0,67.0 0 0 1 1648.6,926.9" fill="none" stroke="#fff" stroke-width="1.300" opacity="0.85" stroke-linecap="round"/>
<path d="M1615.3,894.4 Q1631.1,900.2 1639.8,918.9" fill="none" stroke="#111" stroke-width="2.800" stroke-linecap="round"/>
<path d="M1598.0,926.1l20.7,38.8" stroke="#e8604a" stroke-width="1.800" fill="none"/>
<path d="M1602.2,924.6l20.7,38.8" stroke="#e8604a" stroke-width="1.800" fill="none"/>
<rect x="1560.6" y="927.3" width="39.0" height="41.0" rx="3" transform="rotate(-18.8 1586.5 952)" stroke="#111" stroke-width="1.300" fill="none"/>
<rect x="1577.1" y="938.9" width="34.9" height="36.3" rx="3" transform="rotate(-21.8 1586.5 952)" stroke="#111" stroke-width="1.300" fill="none"/>
<rect x="1564.5" y="943.7" width="38.8" height="37.4" rx="3" transform="rotate(-30.1 1586.5 952)" stroke="#111" stroke-width="1.300" fill="none"/>
<rect x="1571.1" y="941.7" width="37.6" height="35.2" rx="3" transform="rotate(-18.7 1586.5 952)" stroke="#111" stroke-width="1.300" fill="none"/>
<circle cx="1630.6" cy="952.8" r="1.900" fill="#111"/>
<circle cx="1636.8" cy="949.1" r="1.900" fill="#111"/>
<circle cx="1643.0" cy="945.4" r="1.900" fill="#111"/>
<text transform="translate(1574.3 993.0) rotate(47)" text-anchor="end" font-size="8.200" font-weight="bold" letter-spacing="0.900" fill="#1a1a1a">OLIMPIA</text>
<text transform="translate(1572.1 1006.0) rotate(47)" text-anchor="end" font-size="8.200" font-weight="bold" letter-spacing="0.900" fill="#1a1a1a">VETTORELLO</text>
</g>
<g>
<defs><clipPath id="bc21"><circle cx="1771" cy="952" r="72.0"/></clipPath></defs>
<circle cx="1771" cy="952" r="72.0" fill="#dcdbd8"/>
<path d="M1658.0,1043.4L1904.8,895.1L1909.8,903.4L1663.0,1051.8Z" fill="#efefef" clip-path="url(#bc21)"/>
<path d="M1733.9,1015.1L1862.0,938.1M1742.7,1018.1L1861.5,946.8M1751.9,1021.0L1857.3,957.7M1755.9,1027.0L1861.0,963.9M1764.8,1030.1L1855.9,975.3M1773.0,1033.5L1856.9,983.1" stroke="#4f75bf" stroke-width="12.2" stroke-linecap="round" fill="none" opacity="1"/>
<path d="M1662.2,1050.5L1909.1,902.2L1968.6,1001.3L1721.7,1149.6Z" fill="#4f75bf" clip-path="url(#bc21)"/>
<circle cx="1771" cy="952" r="72.0" fill="none" stroke="#9a9a9a" stroke-width="0.8" opacity="0.8"/>
<path d="M1796.1,889.9 A67.0,67.0 0 0 1 1833.1,926.9" fill="none" stroke="#fff" stroke-width="1.300" opacity="0.85" stroke-linecap="round"/>
<path d="M1799.8,894.4 Q1815.6,900.2 1824.3,918.9" fill="none" stroke="#111" stroke-width="2.800" stroke-linecap="round"/>
<path d="M1782.5,926.1l20.7,38.8" stroke="#5f8be0" stroke-width="1.800" fill="none"/>
<path d="M1786.7,924.6l20.7,38.8" stroke="#5f8be0" stroke-width="1.800" fill="none"/>
<rect x="1749.2" y="940.7" width="32.8" height="43.7" rx="3" transform="rotate(-19.7 1771 952)" stroke="#111" stroke-width="1.300" fill="none"/>
<rect x="1755.6" y="927.7" width="30.5" height="38.5" rx="3" transform="rotate(-26.1 1771 952)" stroke="#111" stroke-width="1.300" fill="none"/>
<rect x="1753.2" y="931.1" width="39.1" height="35.3" rx="3" transform="rotate(-23.9 1771 952)" stroke="#111" stroke-width="1.300" fill="none"/>
<rect x="1742.7" y="929.9" width="39.0" height="36.4" rx="3" transform="rotate(-24.4 1771 952)" stroke="#111" stroke-width="1.300" fill="none"/>
<circle cx="1815.1" cy="952.8" r="1.900" fill="#111"/>
<text transform="translate(1758.8 993.0) rotate(47)" text-anchor="end" font-size="8.200" font-weight="bold" letter-spacing="0.900" fill="#1a1a1a">KELLY</text>
<text transform="translate(1756.6 1006.0) rotate(47)" text-anchor="end" font-size="8.200" font-weight="bold" letter-spacing="0.900" fill="#1a1a1a">SPITZNER</text>
</g>
<g>
<defs><clipPath id="bc22"><circle cx="1403" cy="1135" r="72.0"/></clipPath></defs>
<circle cx="1403" cy="1135" r="72.0" fill="#dcdbd8"/>
<path d="M1290.0,1226.4L1536.8,1078.1L1541.8,1086.4L1295.0,1234.8Z" fill="#efefef" clip-path="url(#bc22)"/>
<path d="M1294.2,1233.5L1541.1,1085.2L1600.6,1184.3L1353.7,1332.6Z" fill="#ee1158" clip-path="url(#bc22)"/>
<circle cx="1403" cy="1135" r="72.0" fill="none" stroke="#9a9a9a" stroke-width="0.8" opacity="0.8"/>
<path d="M1428.1,1072.9 A67.0,67.0 0 0 1 1465.1,1109.9" fill="none" stroke="#fff" stroke-width="1.300" opacity="0.85" stroke-linecap="round"/>
<path d="M1431.8,1077.4 Q1447.6,1083.2 1456.3,1101.9" fill="none" stroke="#111" stroke-width="2.800" stroke-linecap="round"/>
<path d="M1414.5,1109.1l20.7,38.8" stroke="#e3d35a" stroke-width="1.800" fill="none"/>
<path d="M1418.7,1107.6l20.7,38.8" stroke="#e3d35a" stroke-width="1.800" fill="none"/>
<rect x="1378.0" y="1122.5" width="36.9" height="41.9" rx="3" transform="rotate(-18.2 1403 1135)" stroke="#111" stroke-width="1.300" fill="none"/>
<rect x="1374.9" y="1109.0" width="39.7" height="41.4" rx="3" transform="rotate(-30.1 1403 1135)" stroke="#111" stroke-width="1.300" fill="none"/>
<rect x="1380.9" y="1127.0" width="39.4" height="37.6" rx="3" transform="rotate(-27.6 1403 1135)" stroke="#111" stroke-width="1.300" fill="none"/>
<rect x="1377.4" y="1120.5" width="35.5" height="39.2" rx="3" transform="rotate(-20.2 1403 1135)" stroke="#111" stroke-width="1.300" fill="none"/>
<circle cx="1447.1" cy="1135.8" r="1.900" fill="#111"/>
<text transform="translate(1390.8 1176.0) rotate(47)" text-anchor="end" font-size="8.200" font-weight="bold" letter-spacing="0.900" fill="#1a1a1a">GIORGIA</text>
<text transform="translate(1381.4 1189.0) rotate(47)" text-anchor="end" font-size="8.200" font-weight="bold" letter-spacing="0.900" fill="#1a1a1a">LUPI</text>
</g>
<g>
<defs><clipPath id="bc23"><circle cx="1586.5" cy="1135" r="72.0"/></clipPath></defs>
<circle cx="1586.5" cy="1135" r="72.0" fill="#d9e1f2"/>
<path d="M1473.5,1226.4L1720.3,1078.1L1725.3,1086.4L1478.5,1234.8Z" fill="#efefef" clip-path="url(#bc23)"/>
<path d="M1552.4,1196.2L1669.8,1125.7M1557.3,1201.7L1670.5,1133.7M1566.9,1204.3L1672.3,1141.0M1575.1,1207.8L1674.3,1148.2M1580.2,1213.1L1677.2,1154.9M1587.3,1217.3L1675.5,1164.3" stroke="#4f75bf" stroke-width="12.2" stroke-linecap="round" fill="none" opacity="1"/>
<path d="M1477.7,1233.5L1724.6,1085.2L1784.1,1184.3L1537.2,1332.6Z" fill="#4f75bf" clip-path="url(#bc23)"/>
<circle cx="1586.5" cy="1135" r="72.0" fill="none" stroke="#9a9a9a" stroke-width="0.8" opacity="0.8"/>
<path d="M1611.6,1072.9 A67.0,67.0 0 0 1 1648.6,1109.9" fill="none" stroke="#fff" stroke-width="1.300" opacity="0.85" stroke-linecap="round"/>
<path d="M1598.0,1109.1l20.7,38.8" stroke="#62dcd0" stroke-width="1.800" fill="none"/>
<path d="M1602.2,1107.6l20.7,38.8" stroke="#62dcd0" stroke-width="1.800" fill="none"/>
<path d="M1564.2,1125.6L1592.5,1169.3L1598.0,1168.1L1566.4,1119.5L1569.6,1114.9L1605.6,1170.3L1611.0,1169.1L1572.9,1110.4L1576.2,1105.9L1609.9,1157.9L1615.4,1156.8L1588.2,1114.8L1591.4,1110.3L1615.4,1147.2L1620.9,1146.1" stroke="#111" stroke-width="3.400" fill="none" stroke-linejoin="round" stroke-linecap="round"/>
<path d="M1564.2,1125.6L1592.5,1169.3L1598.0,1168.1L1566.4,1119.5L1569.6,1114.9L1605.6,1170.3L1611.0,1169.1L1572.9,1110.4L1576.2,1105.9L1609.9,1157.9L1615.4,1156.8L1588.2,1114.8L1591.4,1110.3L1615.4,1147.2L1620.9,1146.1" stroke="#d9e1f2" stroke-width="1.200" fill="none" stroke-linejoin="round" stroke-linecap="round" opacity="0.9"/>
<circle cx="1630.6" cy="1135.8" r="1.900" fill="#111"/>
<circle cx="1636.8" cy="1132.1" r="1.900" fill="#111"/>
<circle cx="1643.0" cy="1128.4" r="1.900" fill="#111"/>
<text transform="translate(1574.3 1176.0) rotate(47)" text-anchor="end" font-size="8.200" font-weight="bold" letter-spacing="0.900" fill="#1a1a1a">MATTHEW</text>
<text transform="translate(1564.9 1189.0) rotate(47)" text-anchor="end" font-size="8.200" font-weight="bold" letter-spacing="0.900" fill="#1a1a1a">CLAY</text>
</g>
<g>
<defs><clipPath id="bc24"><circle cx="1771" cy="1135" r="72.0"/></clipPath></defs>
<circle cx="1771" cy="1135" r="72.0" fill="#f7edb5"/>
<path d="M1658.0,1226.4L1904.8,1078.1L1909.8,1086.4L1663.0,1234.8Z" fill="#efefef" clip-path="url(#bc24)"/>
<path d="M1662.2,1233.5L1909.1,1085.2L1968.6,1184.3L1721.7,1332.6Z" fill="#ee1158" clip-path="url(#bc24)"/>
<circle cx="1771" cy="1135" r="72.0" fill="none" stroke="#9a9a9a" stroke-width="0.8" opacity="0.8"/>
<path d="M1796.1,1072.9 A67.0,67.0 0 0 1 1833.1,1109.9" fill="none" stroke="#fff" stroke-width="1.300" opacity="0.85" stroke-linecap="round"/>
<path d="M1799.8,1077.4 Q1815.6,1083.2 1824.3,1101.9" fill="none" stroke="#111" stroke-width="2.800" stroke-linecap="round"/>
<path d="M1782.5,1109.1l20.7,38.8" stroke="#7fe0a4" stroke-width="1.800" fill="none"/>
<path d="M1786.7,1107.6l20.7,38.8" stroke="#7fe0a4" stroke-width="1.800" fill="none"/>
<path d="M1748.7,1125.6L1777.0,1169.3L1782.5,1168.1L1750.9,1119.5L1754.1,1114.9L1790.1,1170.3L1795.5,1169.1L1757.4,1110.4L1760.7,1105.9L1794.4,1157.9L1799.9,1156.8L1772.7,1114.8L1775.9,1110.3L1799.9,1147.2L1805.4,1146.1" stroke="#111" stroke-width="3.400" fill="none" stroke-linejoin="round" stroke-linecap="round"/>
<path d="M1748.7,1125.6L1777.0,1169.3L1782.5,1168.1L1750.9,1119.5L1754.1,1114.9L1790.1,1170.3L1795.5,1169.1L1757.4,1110.4L1760.7,1105.9L1794.4,1157.9L1799.9,1156.8L1772.7,1114.8L1775.9,1110.3L1799.9,1147.2L1805.4,1146.1" stroke="#f7edb5" stroke-width="1.200" fill="none" stroke-linejoin="round" stroke-linecap="round" opacity="0.9"/>
<circle cx="1815.1" cy="1135.8" r="1.900" fill="#111"/>
<text transform="translate(1758.8 1176.0) rotate(47)" text-anchor="end" font-size="8.200" font-weight="bold" letter-spacing="0.900" fill="#1a1a1a">OLIMPIA</text>
<text transform="translate(1756.6 1189.0) rotate(47)" text-anchor="end" font-size="8.200" font-weight="bold" letter-spacing="0.900" fill="#1a1a1a">VETTORELLO</text>
</g>
<path d="M1342,543L1359,557" stroke="#111" stroke-width="1.3" fill="none" stroke-linecap="round"/>
<path d="M1346,540L1363,554" stroke="#111" stroke-width="1.3" fill="none" stroke-linecap="round"/>
<path d="M1438,532L1452,540" stroke="#111" stroke-width="2.6" fill="none" stroke-linecap="round"/>
<path d="M1452,540L1460,554" stroke="#111" stroke-width="2.6" fill="none" stroke-linecap="round"/>
<path d="M1583,513L1583.5,535" stroke="#111" stroke-width="1.3" fill="none" stroke-linecap="round"/>
<path d="M1805,550L1823,537" stroke="#111" stroke-width="1.3" fill="none" stroke-linecap="round"/>
<path d="M1430,717L1447,699" stroke="#111" stroke-width="1.3" fill="none" stroke-linecap="round"/>
<path d="M1612,715L1631,700" stroke="#111" stroke-width="1.3" fill="none" stroke-linecap="round"/>
<path d="M1792,714L1812,697" stroke="#111" stroke-width="1.3" fill="none" stroke-linecap="round"/>
<path d="M1425,883L1440,865" stroke="#111" stroke-width="1.3" fill="none" stroke-linecap="round"/>
<path d="M1430,885L1445,867" stroke="#111" stroke-width="1.3" fill="none" stroke-linecap="round"/>
<path d="M1611,885L1630,870" stroke="#111" stroke-width="1.3" fill="none" stroke-linecap="round"/>
<path d="M1788,877L1806,863" stroke="#111" stroke-width="1.3" fill="none" stroke-linecap="round"/>
<path d="M1393,1025L1394,1041" stroke="#111" stroke-width="1.3" fill="none" stroke-linecap="round"/>
<path d="M1619,1064L1638,1048" stroke="#111" stroke-width="1.3" fill="none" stroke-linecap="round"/>
<path d="M1623,1067L1642,1051" stroke="#111" stroke-width="1.3" fill="none" stroke-linecap="round"/>
<path d="M1716,1046L1732,1063" stroke="#111" stroke-width="1.3" fill="none" stroke-linecap="round"/>
<path d="M1720,1043L1736,1060" stroke="#111" stroke-width="1.3" fill="none" stroke-linecap="round"/>
<defs><clipPath id="lc4"><circle cx="2016.5" cy="879.500" r="30.500"/></clipPath><clipPath id="lc6"><circle cx="2016.5" cy="1082" r="30.500"/></clipPath></defs>
<circle cx="2016.5" cy="547.5" r="31" fill="#f2f2f2" stroke="#c9c9c9" stroke-width="1"/>
<circle cx="2016.5" cy="656.5" r="31" fill="#f2f2f2" stroke="#c9c9c9" stroke-width="1"/>
<circle cx="2016.5" cy="776.5" r="31" fill="#f2f2f2" stroke="#c9c9c9" stroke-width="1"/>
<circle cx="2016.5" cy="879.5" r="31" fill="#f2f2f2" stroke="#c9c9c9" stroke-width="1"/>
<circle cx="2016.5" cy="985.5" r="31" fill="#f2f2f2" stroke="#c9c9c9" stroke-width="1"/>
<circle cx="2016.5" cy="1082" r="31" fill="#f2f2f2" stroke="#c9c9c9" stroke-width="1"/>
<circle cx="2016.5" cy="1172" r="31" fill="#f2f2f2" stroke="#c9c9c9" stroke-width="1"/>
<path d="M2008,546 l10,18 l3,-1.500 l-10,-18 l3,-2 l10,18 l3,-1.500 l-10,-18 l2,-1" transform="translate(-1 -3)" stroke="#222" stroke-width="2" fill="none" stroke-linejoin="round"/>
<path d="M2021,653 l8,14 M2023.500,651.500 l8,14" stroke="#86dccb" stroke-width="1.400" fill="none"/>
<path d="M2020,745 v14 M1990.500,763 l10,8 M2032,771 l13,-6" stroke="#222" stroke-width="2" fill="none"/>
<path d="M1943.8,930.7 L2098.9,842.5 L2098.9,960 L1943.8,960Z" fill="#e3144f" clip-path="url(#lc4)"/>
<circle cx="2016.5" cy="879.500" r="31" fill="none" stroke="#c9c9c9" stroke-width="1"/>
<circle cx="2024.5" cy="998.0" r="1.300" fill="#111"/>
<circle cx="2028.7" cy="995.4" r="1.300" fill="#111"/>
<circle cx="2032.9" cy="992.8" r="1.300" fill="#111"/>
<circle cx="2037.1" cy="990.2" r="1.300" fill="#111"/>
<circle cx="2041.3" cy="987.6" r="1.300" fill="#111"/>
<path d="M1950.8,1137.4 L2089.1,1032.7 L2089.1,1000 L1950.8,1000Z" fill="#d1cfcd" clip-path="url(#lc6)"/>
<circle cx="2016.5" cy="1082" r="31" fill="none" stroke="#c9c9c9" stroke-width="1"/>
<text x="2115" y="521.5" font-size="10.200" font-weight="bold" fill="#222">Which TED letter are you?</text>
<text x="2115" y="536.2" font-size="10.200" fill="#333">A.Technology,</text>
<text x="2115" y="550.9" font-size="10.200" fill="#333">B.Entertainment</text>
<text x="2115" y="565.6" font-size="10.200" fill="#333">C. Design</text>
<text x="2115" y="609.5" font-size="10.200" font-weight="bold" fill="#222">When do you get your best ideas?</text>
<text x="2115" y="624.2" font-size="10.200" fill="#333">A. Right before I fall asleep/wake-up</text>
<circle cx="2098.500" cy="620.7" r="2.900" fill="#d8174f"/>
<text x="2115" y="638.9" font-size="10.200" fill="#333">B. While I'm getting ready</text>
<circle cx="2098.500" cy="635.4" r="2.900" fill="#a653b5"/>
<text x="2115" y="653.6" font-size="10.200" fill="#333">C. During my commute</text>
<circle cx="2098.500" cy="650.1" r="2.900" fill="#cf5f52"/>
<text x="2115" y="668.3" font-size="10.200" fill="#333">D. At the office</text>
<circle cx="2098.500" cy="664.8" r="2.900" fill="#5fcfba"/>
<text x="2115" y="683.0" font-size="10.200" fill="#333">E. After an adult beverage</text>
<circle cx="2098.500" cy="679.5" r="2.900" fill="#e9b81c"/>
<text x="2115" y="697.7" font-size="10.200" fill="#333">F. I never know when brilliance might strike</text>
<circle cx="2098.500" cy="694.2" r="2.900" fill="#3a66b8"/>
<text x="2115" y="742.0" font-size="10.200" font-weight="bold" fill="#222">When I have a chance to read, I prefer:</text>
<text x="2115" y="756.7" font-size="10.200" fill="#333">A. A novel</text>
<text x="2115" y="771.4" font-size="10.200" fill="#333">B. Non-fiction</text>
<text x="2115" y="786.1" font-size="10.200" fill="#333">C. Newspaper</text>
<text x="2115" y="800.8" font-size="10.200" fill="#333">D. Magazine</text>
<text x="2115" y="815.5" font-size="10.200" fill="#333">E. Does Twitter count?</text>
<text x="2115" y="860.3" font-size="10.200" font-weight="bold" fill="#222">When it comes to the rules, do you:</text>
<text x="2115" y="875.0" font-size="10.200" fill="#333">A. Follow them</text>
<circle cx="2098.500" cy="871.5" r="2.900" fill="#4a6fc0"/>
<text x="2115" y="889.7" font-size="10.200" fill="#333">B. Fudge them</text>
<circle cx="2098.500" cy="886.2" r="2.900" fill="#e9b81c"/>
<text x="2115" y="904.4" font-size="10.200" fill="#333">C. Ignore them</text>
<circle cx="2098.500" cy="900.9" r="2.900" fill="#e3144f"/>
<text x="2115" y="949.0" font-size="10.200" font-weight="bold" fill="#222">How many unread e-mails in the inbox</text>
<text x="2115" y="963.7" font-size="10.200" font-weight="bold" fill="#222">before you start to feel anxious?</text>
<text x="2115" y="978.4" font-size="10.200" fill="#333">A.  1</text>
<circle cx="2098.5" cy="974.9" r="1.300" fill="#111"/>
<text x="2115" y="993.1" font-size="10.200" fill="#333">B. 20</text>
<circle cx="2098.5" cy="989.6" r="1.300" fill="#111"/>
<circle cx="2093.5" cy="991.1" r="1.300" fill="#111"/>
<text x="2115" y="1007.8" font-size="10.200" fill="#333">C. Over 100</text>
<circle cx="2098.5" cy="1004.3" r="1.300" fill="#111"/>
<circle cx="2093.5" cy="1005.8" r="1.300" fill="#111"/>
<circle cx="2088.5" cy="1007.3" r="1.300" fill="#111"/>
<text x="2115" y="1022.5" font-size="10.200" fill="#333">D. I don't get anxious until I hit the 1000s.</text>
<circle cx="2098.5" cy="1019.0" r="1.300" fill="#111"/>
<circle cx="2093.5" cy="1020.5" r="1.300" fill="#111"/>
<circle cx="2088.5" cy="1022.0" r="1.300" fill="#111"/>
<circle cx="2083.5" cy="1023.5" r="1.300" fill="#111"/>
<text x="2115" y="1066.3" font-size="10.200" font-weight="bold" fill="#222">My workspace is:</text>
<text x="2115" y="1081.0" font-size="10.200" fill="#333">A. Minimalist</text>
<circle cx="2098.500" cy="1077.5" r="2.900" fill="#d9d9d9"/>
<text x="2115" y="1095.7" font-size="10.200" fill="#333">B. Covered in photos/momentos</text>
<circle cx="2098.500" cy="1092.2" r="2.900" fill="#f3e2d0"/>
<text x="2115" y="1110.4" font-size="10.200" fill="#333">C. Covered in papers/work stuff</text>
<circle cx="2098.500" cy="1106.9" r="2.900" fill="#ece6b0"/>
<text x="2115" y="1125.1" font-size="10.200" fill="#333">D. Preferably a hammock</text>
<circle cx="2098.500" cy="1121.6" r="2.900" fill="#dfe6ee"/>
<text x="2115" y="1169.2" font-size="10.200" font-weight="bold" fill="#222">The future is</text>
<text x="2115" y="1183.9" font-size="10.200" fill="#333">A. bright</text>
<text x="2115" y="1198.6" font-size="10.200" fill="#333">B. Grim</text>
<g stroke="#222" fill="none" stroke-width="1.400">
<path d="M2089,528 l2,9 M2092,526 l2.500,11 M2095,525 l2.500,12 M2098,528 l1.500,8"/>
<path d="M2088,549 l12,-3 l-8,8 l2,-11 l5,9 z"/>
<path d="M2087,561 h9 v8 h-9 z M2090,559 h9 v8 h-9 z M2093,563 h6"/>
<path d="M2091,757 l10,-5"/><path d="M2092,770 l10,-5 M2093,773 l10,-5"/><path d="M2092,779 l9,5"/><path d="M2091,795 l9,5 M2092,792 l9,5"/><path d="M2095,808 v8"/>
<path d="M2091,1186 q6,2 7,9"/>
</g>
<path d="M2090,1172 l6,-3 l7,2 l2,8 l-4,5 l-8,-1 l-4,-6 z" fill="#111"/>
</svg>
<div class="abs" style="left:1280px;top:468px;width:1109px;height:759px;border:2px solid #4a86f5;box-sizing:border-box;"></div>
<div class="abs" style="left:1276.5px;top:464.5px;width:7px;height:7px;background:#3f82f7;"></div>
<div class="abs" style="left:2385.5px;top:464.5px;width:7px;height:7px;background:#3f82f7;"></div>
<div class="abs" style="left:1276.5px;top:1223.5px;width:7px;height:7px;background:#3f82f7;"></div>
<div class="abs" style="left:2385.5px;top:1223.5px;width:7px;height:7px;background:#3f82f7;"></div>
<!-- ===== RIGHT PANEL ===== -->
<div class="abs" style="left:2479px;top:124px;width:32px;height:1604px;background:#4a4a4a;"></div>
<div class="abs" style="left:2511px;top:64px;width:508px;height:1693px;background:#535353;"></div>
<div class="abs" style="left:2511px;top:64px;width:2px;height:1693px;background:#3a3a3a;"></div>
<div class="abs" style="left:2515px;top:64px;width:2px;height:1693px;background:#3c3c3c;"></div>
<div class="abs" style="left:3017px;top:0;width:2px;height:1757px;background:#3a3a3a;"></div>
<div class="abs" style="left:2517px;top:1660px;width:500px;height:97px;background:linear-gradient(rgba(0,0,0,0),rgba(0,0,0,0.07));"></div>
<div class="abs" style="left:2517px;top:64px;width:500px;height:24px;background:#424242;"></div>
<svg width="16" height="12" style="left:2990px;top:71px" viewBox="0 0 16 12"><path d="M1,1 L6,6 L1,11 M9,1 L14,6 L9,11" fill="none" stroke="#c8c8c8" stroke-width="1.800"/></svg>
<div class="abs" style="left:2517px;top:88px;width:500px;height:55.500px;background:#434343;border-top:2px solid #3a3a3a;box-sizing:border-box;"></div>
<div class="abs" style="left:2631px;top:90px;width:76px;height:54px;background:#535353;"></div>
<div class="abs" style="left:2574px;top:90px;width:2px;height:53px;background:#3a3a3a;"></div>
<div class="abs" style="left:2629px;top:90px;width:2px;height:53px;background:#3a3a3a;"></div>
<div class="abs" style="left:2707px;top:90px;width:2px;height:53px;background:#3a3a3a;"></div>
<div class="abs" style="left:2764px;top:90px;width:2px;height:53px;background:#3a3a3a;"></div>
<div class="abs" style="left:2820px;top:90px;width:2px;height:53px;background:#3a3a3a;"></div>
<div class="abs" style="left:2876px;top:90px;width:2px;height:53px;background:#3a3a3a;"></div>
<div class="abs" style="left:2938px;top:90px;width:2px;height:53px;background:#3a3a3a;"></div>
<div class="t" style="left:2536px;top:104.9px;width:38px;overflow:hidden;font-size:21.5px;color:#bdbdbd;letter-spacing:1.400px;">Retype</div>
<div class="t" style="left:2592px;top:105.9px;width:30px;overflow:hidden;font-size:21.5px;color:#bdbdbd;">库</div>
<div class="t" style="left:2648px;top:105.9px;width:50px;overflow:hidden;font-size:21.5px;color:#f4f4f4;font-weight:500;">属性</div>
<div class="t" style="left:2726px;top:105.9px;width:38px;overflow:hidden;font-size:21.5px;color:#bdbdbd;">画笔</div>
<div class="t" style="left:2781.5px;top:105.9px;width:38.5px;overflow:hidden;font-size:21.5px;color:#bdbdbd;">透明度</div>
<div class="t" style="left:2837px;top:105.9px;width:39px;overflow:hidden;font-size:21.5px;color:#bdbdbd;">外观</div>
<div class="t" style="left:2894px;top:105.9px;width:44px;overflow:hidden;font-size:21.5px;color:#bdbdbd;">色板</div>
<div class="t" style="left:2537.5px;top:165.8px;font-size:25px;color:#d6d6d6;">编组</div>
<div class="sep" style="top:209px"></div>
<div class="t" style="left:2537.5px;top:234.2px;font-size:25px;color:#d6d6d6;">变换</div>
<svg width="38" height="38" style="left:2537px;top:300px" viewBox="0 0 38 38"><g fill="none" stroke="#c8c8c8" stroke-width="1.800">
<path d="M8,4.500H15M23,4.500H30M8,19H15M23,19H30M8,33.500H15M23,33.500H30M4.500,8V15M4.500,23V30M19,8V15M19,23V30M33.500,8V15M33.500,23V30"/>
<rect x="1" y="1" width="7" height="7"/><rect x="15.500" y="1" width="7" height="7"/><rect x="30" y="1" width="7" height="7"/>
<rect x="1" y="15.500" width="7" height="7"/><rect x="30" y="15.500" width="7" height="7"/>
<rect x="1" y="30" width="7" height="7"/><rect x="15.500" y="30" width="7" height="7"/><rect x="30" y="30" width="7" height="7"/>
</g><rect x="14.600" y="14.600" width="8.800" height="8.800" fill="#f4f4f4"/></svg>
<div class="t" style="left:2597px;top:280.8px;font-size:26px;color:#d6d6d6;">X:</div>
<div class="t" style="left:2597px;top:332.3px;font-size:26px;color:#d6d6d6;">Y:</div>
<div class="t" style="left:2770px;top:281.2px;font-size:25px;color:#d6d6d6;">宽:</div>
<div class="t" style="left:2770px;top:332.8px;font-size:25px;color:#d6d6d6;">高:</div>
<div class="fld" style="left:2628px;top:274px;width:109.5px;height:38px;"></div>
<div class="v" id="vx" style="left:2637.5px;top:279.8px;letter-spacing:-0.600px;">399.921</div>
<div class="fld" style="left:2628px;top:326px;width:109.5px;height:38px;"></div>
<div class="v" id="vy" style="left:2640px;top:331.8px;letter-spacing:-0.600px;">129.836</div>
<div class="fld" style="left:2810px;top:274px;width:109.5px;height:38px;"></div>
<div class="v" id="vw" style="left:2819px;top:279.8px;letter-spacing:-0.600px;">305.067</div>
<div class="fld" style="left:2810px;top:326px;width:109.5px;height:38px;"></div>
<div class="v" id="vh" style="left:2819px;top:331.8px;letter-spacing:-0.600px;">208.364</div>
<div class="abs" style="left:2939px;top:296px;width:48px;height:48px;background:#2d2d2d;border-radius:5px;"></div>
<svg width="48" height="48" style="left:2939px;top:296px" viewBox="0 0 48 48"><g fill="none" stroke="#fff" stroke-width="3" stroke-linecap="round">
<path d="M19.200,19.500 V15 a5.600,5.600 0 0 1 11.200,0 V23 a6.500,6.500 0 0 1 -5.600,6.300"/><path d="M30.400,28.500 V33 a5.600,5.600 0 0 1 -11.200,0 V25 a6.500,6.500 0 0 1 5.600,-6.300"/></g></svg>
<svg width="30" height="20" style="left:2586px;top:381px" viewBox="0 0 30 20"><path d="M1.500,17.500 L16.500,2 M1.500,17.500 H22" fill="none" stroke="#c8c8c8" stroke-width="2.200" stroke-linecap="round"/><path d="M11.500,8.500 Q16.500,11 16.500,17" fill="none" stroke="#c8c8c8" stroke-width="1.600"/><circle cx="26.500" cy="8.500" r="1.700" fill="#c8c8c8"/><circle cx="26.500" cy="16.500" r="1.700" fill="#c8c8c8"/></svg>
<div class="fld" style="left:2635px;top:378px;width:109.5px;height:38px;"></div>
<div class="abs" style="left:2708px;top:379.5px;width:35px;height:35px;background:#4a4a4a;border-left:2px solid #5a5a5a;box-sizing:border-box;border-radius:0 3px 3px 0;"></div>
<div class="v" id="vang" style="left:2641px;top:384.5px;">0°</div>
<svg width="18" height="10" style="left:2716.5px;top:393px" viewBox="0 0 18 10"><path d="M1.500,1.500 L9,8.500 L16.500,1.500" fill="none" stroke="#e6e6e6" stroke-width="2"/></svg>
<svg width="28" height="26" style="left:2829px;top:386px" viewBox="0 0 28 26"><path d="M1.500,3.500 L10.500,13 L1.500,22.500 Z" fill="none" stroke="#c8c8c8" stroke-width="1.800"/><path d="M27,2.500 L17.500,13 L27,23.500 Z" fill="#c8c8c8"/><path d="M14,0 V26" stroke="#c8c8c8" stroke-width="1.600" stroke-dasharray="2 2"/></svg>
<svg width="24" height="28" style="left:2879px;top:385px" viewBox="0 0 24 28"><path d="M3,1 L12,10.500 L21,1 Z" fill="#c8c8c8"/><path d="M3.500,26.500 L12,17.500 L20.500,26.500 Z" fill="none" stroke="#c8c8c8" stroke-width="1.800"/><path d="M0,14 H24" stroke="#c8c8c8" stroke-width="1.600" stroke-dasharray="2 2"/></svg>
<div class="dots" style="left:2950px;top:437px"><i></i><i></i><i></i></div>
<div class="sep" style="top:459px"></div>
<div class="t" style="left:2537.5px;top:484.8px;font-size:25px;color:#d6d6d6;">外观</div>
<div class="abs" style="left:2537px;top:531.5px;width:35.5px;height:35px;border:2px solid #2c2c2c;box-sizing:border-box;"></div>
<div class="t" style="left:2547px;top:534.9px;font-size:29px;color:#e4e4e4;">?</div>
<div class="t" style="left:2598px;top:539.8px;font-size:25px;color:#d6d6d6;">填色</div>
<svg width="36" height="36" style="left:2537px;top:589px" viewBox="0 0 36 36"><rect x="1" y="1" width="34" height="34" fill="#fff" stroke="#2c2c2c" stroke-width="2"/><rect x="10.500" y="10.500" width="15" height="15" fill="#535353" stroke="#2c2c2c" stroke-width="2"/><path d="M2.500,33.500 L33.500,2.500" stroke="#f00" stroke-width="3.400"/></svg>
<div class="t" style="left:2598px;top:593.2px;font-size:25px;color:#efefef;border-bottom:2px dotted #d0d0d0;padding-bottom:0px;">描边</div>
<div class="fld" style="left:2720px;top:587px;width:137.5px;height:39.5px;background:#4a4a4a;"></div>
<div class="abs" style="left:2756px;top:588.5px;width:66px;height:36.5px;background:#424242;border-left:2px solid #5a5a5a;border-right:2px solid #5a5a5a;box-sizing:border-box;"></div>
<svg width="18" height="30" style="left:2729px;top:592px" viewBox="0 0 18 30"><path d="M1.500,8.500 L9,1.800 L16.500,8.500 M1.500,21.500 L9,28.200 L16.500,21.500" fill="none" stroke="#e6e6e6" stroke-width="2"/></svg>
<svg width="18" height="10" style="left:2829.5px;top:602.5px" viewBox="0 0 18 10"><path d="M1.500,1.500 L9,8.500 L16.500,1.500" fill="none" stroke="#e6e6e6" stroke-width="2"/></svg>
<svg width="33" height="32" style="left:2539px;top:649px" viewBox="0 0 33 32"><rect x="1" y="1" width="31" height="30" fill="#5a5a5a" stroke="#bdbdbd" stroke-width="2"/><g fill="#6e6e6e"><rect x="2" y="2" width="7.250" height="7"/><rect x="16.500" y="2" width="7.250" height="7"/><rect x="9.250" y="9" width="7.250" height="7"/><rect x="23.750" y="9" width="7.250" height="7"/><rect x="2" y="16" width="7.250" height="7"/><rect x="16.500" y="16" width="7.250" height="7"/><rect x="9.250" y="23" width="7.250" height="7"/><rect x="23.750" y="23" width="7.250" height="7"/></g></svg>
<div class="t" style="left:2598px;top:654.5px;font-size:25.5px;color:#efefef;">不透明度</div>
<div class="abs" style="left:2598px;top:676px;width:102px;height:0;border-top:2px dotted #d0d0d0;"></div>
<div class="fld" style="left:2720px;top:645px;width:137.5px;height:39.5px;"></div>
<div class="abs" style="left:2821px;top:646.5px;width:35px;height:36.5px;background:#4a4a4a;border-left:2px solid #5a5a5a;box-sizing:border-box;border-radius:0 3px 3px 0;"></div>
<div class="v" id="vop" style="left:2729px;top:652px;letter-spacing:-1px;">100%</div>
<svg width="10" height="18" style="left:2835px;top:656px" viewBox="0 0 10 18"><path d="M1.500,1.500 L8.500,9 L1.500,16.500" fill="none" stroke="#e6e6e6" stroke-width="2"/></svg>
<div class="t" id="fx" style="left:2531px;top:722px;font-size:27px;font-style:italic;color:#c8c8c8;letter-spacing:-1px;">fx</div>
<svg width="8" height="5" style="left:2552px;top:743px" viewBox="0 0 8 5"><path d="M0,0 H8 L4,5 Z" fill="#c8c8c8"/></svg>
<div class="dots" style="left:2939.500px;top:780.500px"><i></i><i></i><i></i></div>
<div class="sep" style="top:802px"></div>
<div class="t" style="left:2537.5px;top:828.2px;font-size:25px;color:#d6d6d6;">对齐</div>
<svg width="50" height="32" style="left:2543px;top:881px" viewBox="0 0 50 32"><path d="M7,1 V8 M0,7 H8" stroke="#c8c8c8" stroke-width="1.800" fill="none"/><path d="M7,8 H22 L29,15 V30 H7 Z" fill="#6a6a6a" stroke="#c8c8c8" stroke-width="2"/><path d="M22,8 V15 H29 Z" fill="#c8c8c8"/><path d="M34.500,16.500 L41.500,22.500 L48.500,16.500" fill="none" stroke="#c8c8c8" stroke-width="2"/></svg>
<svg width="32" height="37" style="left:2618px;top:880px" viewBox="0 0 32 37"><rect x="0" y="0" width="2.200" height="37" fill="#c8c8c8"/><rect x="5" y="4.500" width="16" height="11.500" fill="#c8c8c8"/><rect x="5" y="20.500" width="26" height="10" fill="#c8c8c8"/></svg>
<svg width="28" height="37" style="left:2680px;top:880px" viewBox="0 0 28 37"><rect x="13" y="0" width="2.200" height="37" fill="#c8c8c8"/><rect x="5" y="4.500" width="18" height="11.500" fill="#c8c8c8"/><rect x="0.500" y="20.500" width="27" height="10" fill="#c8c8c8"/></svg>
<svg width="32" height="37" style="left:2740px;top:880px" viewBox="0 0 32 37"><rect x="29.500" y="0" width="2.200" height="37" fill="#c8c8c8"/><rect x="11" y="4.500" width="16" height="11.500" fill="#c8c8c8"/><rect x="0.500" y="20.500" width="26.500" height="10" fill="#c8c8c8"/></svg>
<svg width="37" height="31" style="left:2796.500px;top:882px" viewBox="0 0 37 31"><rect x="0" y="0" width="37" height="2.200" fill="#c8c8c8"/><rect x="6.500" y="4.500" width="10" height="25.500" fill="#c8c8c8"/><rect x="20.500" y="4.500" width="12" height="15.500" fill="#c8c8c8"/></svg>
<svg width="37" height="28" style="left:2856.500px;top:884px" viewBox="0 0 37 28"><rect x="0" y="12.400" width="37" height="2.200" fill="#c8c8c8"/><rect x="6.500" y="0" width="10" height="26.500" fill="#c8c8c8"/><rect x="20.500" y="4" width="12" height="18" fill="#c8c8c8"/></svg>
<svg width="37" height="31" style="left:2916.500px;top:884px" viewBox="0 0 37 31"><rect x="0" y="28" width="37" height="2.200" fill="#c8c8c8"/><rect x="6.500" y="0" width="10" height="26" fill="#c8c8c8"/><rect x="20.500" y="10" width="12" height="16" fill="#c8c8c8"/></svg>
<div class="dots" style="left:2950.500px;top:946.500px"><i></i><i></i><i></i></div>
<div class="sep" style="top:969px"></div>
<div class="t" style="left:2537.5px;top:1004.0px;font-size:25.5px;color:#d6d6d6;">快速操作</div>
<div class="qbtn" style="left:2537px;top:1048px;width:216px;">取消嵌入</div>
<div class="qbtn" style="left:2774px;top:1048px;width:217px;">蒙版</div>
<div class="qbtn" style="left:2537px;top:1110.5px;width:216px;">裁剪图像</div>
<div class="qbtn" style="left:2774px;top:1110.5px;width:217px;">图像描摹</div>
<div class="qbtn" style="left:2537px;top:1172.5px;width:454px;">排列</div>
<div class="qbtn" style="left:2537px;top:1234.5px;width:454px;letter-spacing:0.8px;">Retype</div>
<div class="qbtn" style="left:2537px;top:1296.5px;width:454px;">取消编组</div>
<!-- ===== TOOLS PANEL ===== -->
<div class="abs" style="left:-4px;top:416px;width:143.500px;height:847px;background:#535353;border-radius:0 9px 3px 0;box-shadow:2px 3px 7px rgba(0,0,0,0.35);border-right:2px solid #444;box-sizing:border-box;overflow:hidden;">
  <div class="abs" style="left:0;top:0;width:142px;height:27px;background:#424242;border-bottom:2px solid #3a3a3a;"></div>
</div>
<svg width="140" height="50" style="left:0;top:416px" viewBox="0 416 140 50">
  <path d="M7.500,425.500 L18.500,437.500 M18.500,425.500 L7.500,437.500" stroke="#dcdcdc" stroke-width="2.400" fill="none"/>
  <path d="M116,426.500 L111,431.500 L116,436.500 M123.500,426.500 L118.500,431.500 L123.500,436.500" stroke="#c8c8c8" stroke-width="1.700" fill="none"/>
  <path d="M47.500,449.500v9M51.600,449.500v9M55.700,449.500v9M59.800,449.500v9M63.900,449.500v9M68,449.500v9M72.100,449.500v9M76.200,449.500v9M80.300,449.500v9M84.400,449.500v9" stroke="#3b3b3b" stroke-width="1.700"/>
</svg>
<svg id="toolsA" width="140" height="300" style="left:0;top:400px" viewBox="0 0 684.600 1467">
 <g fill="#cfcfcf" stroke="none">
  <rect x="45" y="410" width="273" height="215" rx="14" fill="#2d2d2d"/>
  <polygon points="135,440 248,548 178,566 135,605" fill="none" stroke="#e8e8e8" stroke-width="9" stroke-linejoin="miter"/>
  <polygon points="428,440 545,550 478,568 428,608"/>
  <polygon points="570,612 603,612 603,580"/>
  <!-- pen -->
  <g>
   <path d="M105,828 C110,790 118,760 135,735 L172,712 L232,772 L210,808 C185,822 150,828 105,828 Z"/>
   <polygon points="183,698 213,676 262,728 243,758"/>
   <path d="M108,825 L160,778" stroke="#535353" stroke-width="7" fill="none"/>
   <circle cx="167" cy="772" r="10" fill="#535353"/>
  </g>
  <polygon points="278,850 308,850 308,820"/>
  <g transform="translate(312 0)">
   <path d="M105,828 C110,790 118,760 135,735 L172,712 L232,772 L210,808 C185,822 150,828 105,828 Z"/>
   <polygon points="183,698 213,676 262,728 243,758"/>
   <path d="M108,825 L160,778" stroke="#535353" stroke-width="7" fill="none"/>
   <circle cx="167" cy="772" r="10" fill="#535353"/>
  </g>
  <path d="M392,688 C425,720 398,760 386,790 C378,815 395,832 422,822" stroke="#cfcfcf" stroke-width="8" fill="none" stroke-linecap="round"/>
  <!-- rect -->
  <rect x="105" y="922" width="152" height="132" fill="#6e6e6e" stroke="#cfcfcf" stroke-width="8"/>
  <polygon points="278,1085 308,1085 308,1055"/>
  <!-- brush -->
  <path d="M548,908 C557,914 556,926 548,940 L482,1010 L462,992 L528,922 C537,911 543,906 548,908 Z"/>
  <path d="M455,1000 L476,1021 C470,1050 430,1068 395,1060 C415,1045 420,1030 425,1015 C432,1002 445,998 455,1000 Z"/>
  <polygon points="570,1085 603,1085 603,1055"/>
  <!-- T -->
  <path d="M112,1150 H250 V1195 H235 V1171 H192 V1274 H212 V1290 H150 V1274 H170 V1171 H127 V1195 H112 Z"/>
  <polygon points="278,1320 308,1320 308,1290"/>
  <!-- rotate -->
  <path d="M418,1178 A72,72 0 0 1 548,1222" fill="none" stroke="#cfcfcf" stroke-width="10"/>
  <polygon points="397,1158 401,1212 452,1196"/>
  <g><circle cx="546" cy="1245" r="5"/><circle cx="535" cy="1268" r="5"/><circle cx="517" cy="1285" r="5"/><circle cx="494" cy="1295" r="5"/><circle cx="469" cy="1296" r="5"/><circle cx="445" cy="1288" r="5"/><circle cx="425" cy="1272" r="5"/><circle cx="410" cy="1250" r="5"/></g>
  <polygon points="570,1320 603,1320 603,1290"/>
 </g>
</svg>
<svg id="toolsB" width="140" height="300" style="left:0;top:660px" viewBox="0 0 684.600 1467">
 <defs><linearGradient id="gr1" x1="0" x2="1" y1="0" y2="0"><stop offset="0" stop-color="#2a2a2a"/><stop offset="1" stop-color="#e0e0e0"/></linearGradient></defs>
 <g fill="#cfcfcf" stroke="none">
  <!-- eraser -->
  <path d="M195,98 L268,172 L190,245 L130,182 Z"/>
  <path d="M128,188 L184,245 L155,266 L104,213 Z" fill="none" stroke="#cfcfcf" stroke-width="8" stroke-linejoin="round"/>
  <polygon points="278,282 308,282 308,252"/>
  <!-- shape builder -->
  <ellipse cx="432" cy="172" rx="44" ry="40" fill="none" stroke="#cfcfcf" stroke-width="7"/>
  <ellipse cx="488" cy="160" rx="52" ry="48" fill="none" stroke="#cfcfcf" stroke-width="7"/>
  <path d="M405,172 H500" stroke="#cfcfcf" stroke-width="6" stroke-dasharray="6 6" fill="none"/>
  <polygon points="503,158 582,226 532,236 508,270" stroke="#535353" stroke-width="4"/>
  <!-- gradient -->
  <rect x="105" y="352" width="152" height="134" fill="url(#gr1)" stroke="#cfcfcf" stroke-width="8"/>
  <polygon points="278,518 308,518 308,488"/>
  <!-- measure -->
  <path d="M398,455 L442,498 M505,343 L552,390" stroke="#cfcfcf" stroke-width="7" fill="none"/>
  <path d="M448,452 L505,398" stroke="#cfcfcf" stroke-width="12" fill="none"/>
  <polygon points="425,475 440,428 472,462"/><polygon points="528,372 482,386 514,420"/>
  <polygon points="432,398 462,378 472,392 442,412"/>
  <!-- eyedropper -->
  <path d="M244,578 C262,590 262,612 248,626 L232,642 L242,652 L228,666 L178,616 L192,602 L202,612 L218,596 C226,584 236,576 244,578 Z"/>
  <path d="M196,640 L124,712 C114,722 108,730 112,734 C116,738 124,732 134,722 L206,650" fill="none" stroke="#cfcfcf" stroke-width="8" stroke-linejoin="round"/>
  <!-- puppet/curvature-ish -->
  <path d="M408,600 C430,580 450,600 446,630 C442,660 450,690 478,690 C512,690 520,640 548,632 C566,628 566,650 560,676 C548,640 528,690 490,702 C450,712 428,690 424,650 C422,630 420,612 408,600 Z"/>
  <path d="M402,708 L498,608" stroke="#cfcfcf" stroke-width="7" fill="none"/>
  <circle cx="401" cy="710" r="11" fill="#535353" stroke="#cfcfcf" stroke-width="6"/><circle cx="500" cy="606" r="11" fill="#535353" stroke="#cfcfcf" stroke-width="6"/><circle cx="450" cy="660" r="11" fill="#535353" stroke="#cfcfcf" stroke-width="6"/>
  <!-- blend -->
  <rect x="93" y="822" width="80" height="78"/>
  <rect x="142" y="850" width="74" height="74" rx="30" fill="#9a9a9a" stroke="#cfcfcf" stroke-width="6"/>
  <circle cx="230" cy="918" r="35" fill="#6e6e6e" stroke="#cfcfcf" stroke-width="8"/>
  <!-- artboard -->
  <path d="M430,800 V852 M375,856 H418" stroke="#cfcfcf" stroke-width="7" fill="none"/>
  <path d="M430,856 H508 L540,888 V955 H430 Z" fill="#6e6e6e" stroke="#cfcfcf" stroke-width="8"/>
  <polygon points="508,856 508,888 540,888"/>
  <!-- align-ish -->
  <path d="M108,1040 C130,1095 130,1155 108,1210" fill="none" stroke="#cfcfcf" stroke-width="7"/>
  <polygon points="140,1066 214,1056 220,1104 148,1112"/>
  <polygon points="136,1143 260,1150 256,1198 140,1186"/>
  <!-- zoom -->
  <circle cx="458" cy="1112" r="57" fill="none" stroke="#cfcfcf" stroke-width="10"/>
  <path d="M500,1155 L546,1196" stroke="#cfcfcf" stroke-width="15" fill="none"/>
  <polygon points="570,1222 603,1222 603,1192"/>
 </g>
</svg>
<div class="abs" style="left:8px;top:918px;width:120px;height:2px;background:#4a4a4a;"></div>
<!-- fill / stroke -->
<svg width="140" height="340" style="left:0;top:920px" viewBox="0 920 140 340">
  <defs><linearGradient id="gr2" x1="0" x2="1"><stop offset="0" stop-color="#fff"/><stop offset="1" stop-color="#222"/></linearGradient></defs>
  <!-- stroke box -->
  <rect x="44" y="965" width="70" height="69.500" fill="#fff" stroke="#3a3a3a" stroke-width="1.500"/>
  <rect x="63" y="984" width="32" height="31.500" fill="#535353"/>
  <path d="M45.500,1033 L112.500,966.500" stroke="#f00" stroke-width="4.200"/>
  <!-- fill box -->
  <rect x="8" y="928.500" width="70.500" height="70" fill="#535353" stroke="#333" stroke-width="2"/>
  <!-- swap -->
  <path d="M100,938 h5 a8,8 0 0 1 8,8 v3" fill="none" stroke="#747474" stroke-width="3.500"/>
  <polygon points="97,938 104,930.500 104,945.500" fill="#747474"/><polygon points="113,952.500 106,946.500 119.500,946.500" fill="#747474"/>
  <!-- default -->
  <rect x="15.500" y="1018.500" width="14" height="14" fill="#000" stroke="#fff" stroke-width="2"/>
  <rect x="8.600" y="1011.500" width="14" height="14" fill="#fff" stroke="#000" stroke-width="2"/>
  <!-- color modes -->
  <rect x="8" y="1049.500" width="35.500" height="38" fill="#555" stroke="#5e5e5e" stroke-width="1"/>
  <rect x="46" y="1049.500" width="37" height="38" fill="#555" stroke="#5e5e5e" stroke-width="1"/>
  <rect x="86.500" y="1049.500" width="36.500" height="38" fill="#2f2f2f"/>
  <rect x="12.800" y="1056" width="26.200" height="25" fill="#000"/>
  <rect x="53.500" y="1056.500" width="25" height="24" fill="url(#gr2)" stroke="#000" stroke-width="1.500"/>
  <rect x="94" y="1057" width="23.500" height="23.500" fill="#fff" stroke="#000" stroke-width="2"/>
  <path d="M95,1079.500 L116.500,1058" stroke="#f00" stroke-width="3.600"/>
  <!-- draw modes -->
  <rect x="9" y="1100" width="35" height="34.500" fill="#2f2f2f"/>
  <rect x="46" y="1100" width="37" height="34.500" fill="none" stroke="#5e5e5e" stroke-width="1"/>
  <rect x="86" y="1100" width="37.500" height="34.500" fill="none" stroke="#5e5e5e" stroke-width="1"/>
  <circle cx="25" cy="1116" r="7.500" fill="#777" stroke="#cfcfcf" stroke-width="1.800"/><rect x="26" y="1117" width="11" height="11" fill="#cfcfcf"/>
  <rect x="66" y="1117" width="11" height="11" fill="#cfcfcf"/><circle cx="65" cy="1116" r="7.500" fill="#777" stroke="#cfcfcf" stroke-width="1.800"/>
  <circle cx="105" cy="1116" r="7" fill="#777" stroke="#666" stroke-width="1.500"/><rect x="105" y="1116" width="8" height="8" fill="#5a5a5a"/>
  <!-- screen mode -->
  <rect x="45.800" y="1161" width="26.500" height="22" fill="#737373" stroke="#cfcfcf" stroke-width="2"/><rect x="45" y="1160" width="28" height="5" fill="#cfcfcf"/>
  <rect x="62" y="1153" width="26.500" height="22" fill="#737373" stroke="#cfcfcf" stroke-width="2"/><rect x="61" y="1152" width="28.500" height="5" fill="#cfcfcf"/>
  <circle cx="56" cy="1232" r="3.600" fill="#cfcfcf"/><circle cx="66.500" cy="1232" r="3.600" fill="#cfcfcf"/><circle cx="77" cy="1232" r="3.600" fill="#cfcfcf"/>
</svg>
<div class="t" id="toolq" style="left:34.500px;top:948px;font-size:31px;color:#dedede;">?</div>
<!-- ===== SCROLLBARS ===== -->
<svg width="32" height="1604" style="left:2479px;top:124px" viewBox="2479 124 32 1604">
  <path d="M2488.500,144.500 L2496,137.500 L2503.500,144.500" fill="none" stroke="#a8a8a8" stroke-width="2"/>
  <rect x="2480" y="900.500" width="30" height="48.500" rx="13" fill="#5e5e5e"/>
  <path d="M2488.500,1707.500 L2496,1714.500 L2503.500,1707.500" fill="none" stroke="#c8c8c8" stroke-width="2"/>
</svg>
<!-- ===== CONTEXTUAL TASK BAR ===== -->
<div class="abs" style="left:1597px;top:1606.500px;width:588px;height:71px;background:#535353;border:2px solid #2b2b2b;border-radius:9px;box-sizing:border-box;box-shadow:0 2px 6px rgba(0,0,0,0.25);"></div>
<div class="abs" style="left:1609px;top:1614.500px;width:8px;height:54px;background:#a6a6a6;border-radius:4px;"></div>
<div class="abs" style="left:1637.500px;top:1614.500px;width:183px;height:54.500px;border:1.500px solid #6e6e6e;border-radius:4px;box-sizing:border-box;"></div>
<div class="abs" style="left:1830px;top:1614.500px;width:154.500px;height:54.500px;border:1.500px solid #6e6e6e;border-radius:4px;box-sizing:border-box;"></div>
<svg width="36" height="36" style="left:1655px;top:1624px" viewBox="0 0 36 36">
  <path d="M16,5.500 A13.500,13.500 0 1 0 30.500,21 L16,19.500 Z" fill="#c8c8c8"/>
  <path d="M16,19.500 L5.500,27 A13.500,13.500 0 0 0 16,33 Z" fill="#8f8f8f"/>
  <path d="M16,19.500 L16,33 A13.500,13.500 0 0 0 27.500,27.500 Z" fill="#a8a8a8"/>
  <path d="M28.500,1 L30.200,5.800 L35,7.500 L30.200,9.200 L28.500,14 L26.800,9.200 L22,7.500 L26.800,5.800 Z" fill="#c8c8c8"/>
  <path d="M21.500,10.500 L22.700,13.800 L26,15 L22.700,16.200 L21.500,19.500 L20.300,16.200 L17,15 L20.300,13.800 Z" fill="#c8c8c8" stroke="#535353" stroke-width="0.800"/>
</svg>
<div class="t" id="ctb1" style="left:1699.500px;top:1629.700px;font-size:25.500px;color:#f2f2f2;font-weight:500;">重新着色</div>
<div class="t" id="ctb2" style="left:1855.500px;top:1629.700px;font-size:25.500px;color:#f2f2f2;font-weight:500;">取消编组</div>
<svg width="32" height="32" style="left:2003px;top:1627px" viewBox="0 0 32 32">
  <rect x="1" y="1" width="19" height="19" fill="#c8c8c8"/>
  <rect x="9.500" y="9.500" width="21" height="21" fill="#c8c8c8" stroke="#535353" stroke-width="2"/>
  <path d="M20,14.500 V25.500 M14.500,20 H25.500" stroke="#535353" stroke-width="2.200"/>
</svg>
<svg width="28" height="32" style="left:2065px;top:1627px" viewBox="0 0 28 32">
  <path d="M6.500,14 V10 a7.500,7.500 0 0 1 15,0 V14" fill="none" stroke="#c8c8c8" stroke-width="3.400"/>
  <rect x="1.500" y="13.500" width="25" height="17.500" rx="1.500" fill="#c8c8c8"/>
  <circle cx="14" cy="20.500" r="2.600" fill="#535353"/><rect x="12.700" y="21" width="2.600" height="6" fill="#535353"/>
</svg>
<svg width="36" height="10" style="left:2123px;top:1637px" viewBox="0 0 36 10"><circle cx="5.500" cy="5" r="4.200" fill="#c8c8c8"/><circle cx="18" cy="5" r="4.200" fill="#c8c8c8"/><circle cx="30.500" cy="5" r="4.200" fill="#c8c8c8"/></svg>
<!-- ===== STATUS BAR ===== -->
<div class="abs" style="left:0;top:1678px;width:2479px;height:50px;background:linear-gradient(#545454,#4d4d4d);"></div>
<div class="abs" style="left:0;top:1728px;width:1007px;height:29px;background:#4f4f4f;"></div>
<div class="abs" style="left:1007px;top:1728px;width:1472px;height:29px;background:#484848;"></div>
<div class="abs" style="left:2479px;top:1728px;width:32px;height:29px;background:#535353;"></div>
<svg width="30" height="30" style="left:6px;top:1687px" viewBox="0 0 30 30"><circle cx="15" cy="15" r="14" fill="#c9c9c9"/></svg>
<div class="t" style="left:13.500px;top:1690px;font-size:24px;font-weight:bold;color:#4a4a4a;">?</div>
<div class="t" id="hint" style="left:58px;top:1691px;font-size:22px;color:#dadada;letter-spacing:0.550px;">选择<span style="margin:0 1px 0 9px">“</span>问号<span style="margin:0 9px 0 1px">”</span>图标可了解如何使用该工具。</div>
<!-- bottom fields -->
<div class="fld" style="left:4px;top:1729.500px;width:138px;height:40px;border-color:#5c5c5c;"></div>
<div class="abs" style="left:105px;top:1731px;width:36px;height:30px;background:#4b4b4b;border-left:2px solid #5a5a5a;box-sizing:border-box;"></div>
<div class="v" id="zoomv" style="left:10px;top:1734px;font-size:26px;letter-spacing:-0.300px;">36.16%</div>
<svg width="16" height="9" style="left:114.500px;top:1744px" viewBox="0 0 16 9"><path d="M1.500,1 L8,7.500 L14.500,1" fill="none" stroke="#e0e0e0" stroke-width="2"/></svg>
<div class="fld" style="left:150px;top:1729.500px;width:137px;height:40px;border-color:#5c5c5c;"></div>
<div class="abs" style="left:251px;top:1731px;width:35px;height:30px;background:#4b4b4b;border-left:2px solid #5a5a5a;box-sizing:border-box;"></div>
<div class="v" id="rotv" style="left:156.500px;top:1734px;font-size:26px;">0°</div>
<svg width="16" height="9" style="left:260.500px;top:1744px" viewBox="0 0 16 9"><path d="M1.500,1 L8,7.500 L14.500,1" fill="none" stroke="#e0e0e0" stroke-width="2"/></svg>
<svg width="260" height="20" style="left:300px;top:1737px" viewBox="300 1737 260 20">
  <g fill="#707070"><rect x="305" y="1739" width="3.200" height="16"/><polygon points="321,1739 321,1755 310,1747"/><polygon points="350.500,1739 350.500,1755 340.500,1747"/>
  <polygon points="507,1739 507,1755 517,1747"/><polygon points="536,1739 536,1755 547,1747"/><rect x="548.800" y="1739" width="3.200" height="16"/></g>
</svg>
<div class="fld" style="left:370px;top:1729.500px;width:117px;height:40px;border-color:#5c5c5c;"></div>
<div class="abs" style="left:452px;top:1731px;width:34px;height:30px;background:#4b4b4b;border-left:2px solid #5a5a5a;box-sizing:border-box;"></div>
<div class="v" id="pagev" style="left:379.500px;top:1734px;font-size:26px;">1</div>
<svg width="16" height="9" style="left:461px;top:1744px" viewBox="0 0 16 9"><path d="M1.500,1 L8,7.500 L14.500,1" fill="none" stroke="#e0e0e0" stroke-width="2"/></svg>
<div class="abs" style="left:571px;top:1730px;width:2px;height:27px;background:#474747;"></div>
<div class="abs" style="left:970px;top:1730px;width:2px;height:27px;background:#474747;"></div>
<div class="t" id="stat2" style="left:693.500px;top:1736px;font-size:26px;font-weight:300;color:#dcdcdc;">切换直接选择</div>
<svg width="14" height="22" style="left:984px;top:1735px" viewBox="0 0 14 22"><polygon points="1,1 1,21 12,11" fill="#c8c8c8"/></svg>
<svg width="12" height="18" style="left:1017px;top:1736px" viewBox="0 0 12 18"><path d="M10,1.500 L2.500,9 L10,16.500" fill="none" stroke="#a8a8a8" stroke-width="2"/></svg>
<svg width="12" height="18" style="left:2457px;top:1736px" viewBox="0 0 12 18"><path d="M2,1.500 L9.500,9 L2,16.500" fill="none" stroke="#a8a8a8" stroke-width="2"/></svg>
<div class="abs" style="left:1749px;top:1730px;width:50px;height:44px;border-radius:19px;background:#5d5d5d;"></div>
</body>
</html>
